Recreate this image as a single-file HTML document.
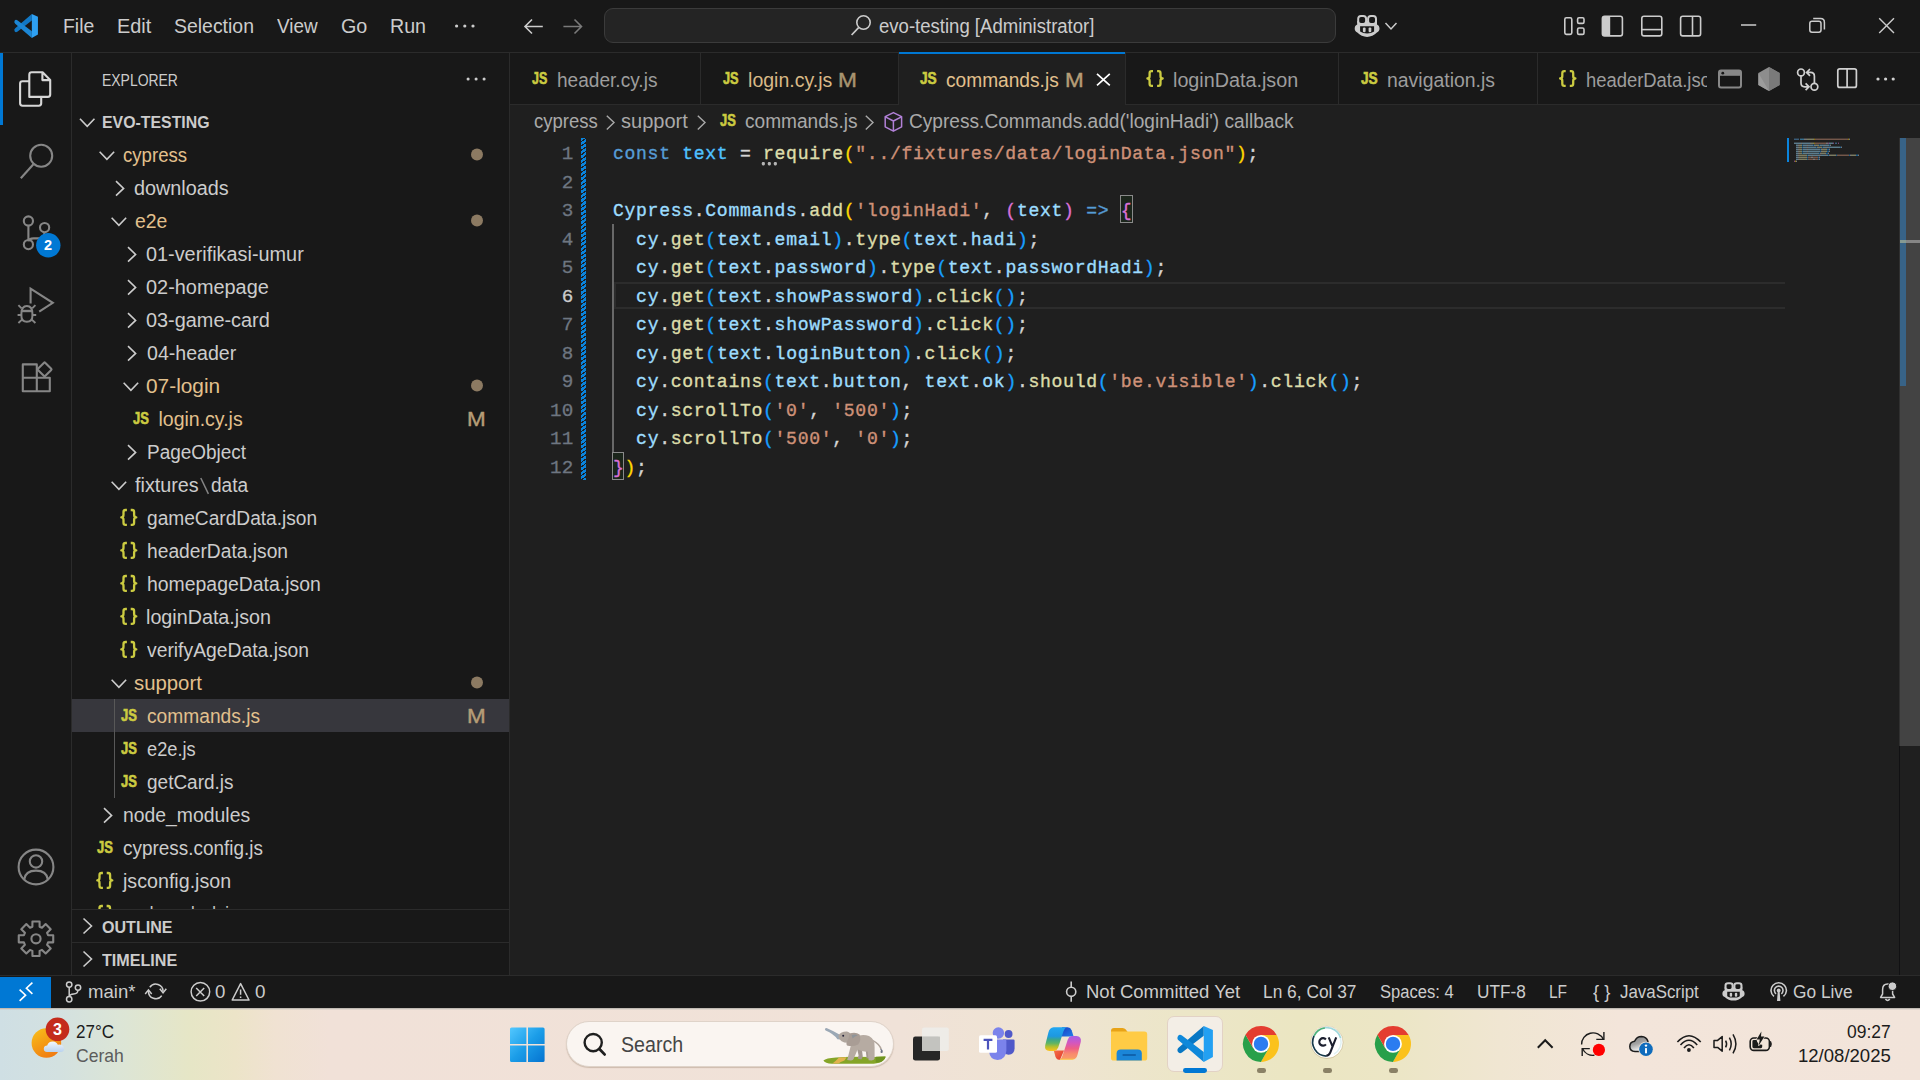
<!DOCTYPE html>
<html><head><meta charset="utf-8"><title>commands.js - evo-testing - Visual Studio Code</title>
<style>
html,body{margin:0;padding:0;background:#181818;}
body{width:1920px;height:1080px;position:relative;overflow:hidden;font-family:"Liberation Sans",sans-serif;}
.b{position:absolute;display:block;}
.t{position:absolute;display:block;white-space:pre;transform-origin:0 0;font-family:"Liberation Sans",sans-serif;}
svg{overflow:visible;}
</style></head><body>
<div class="b" style="left:0px;top:0px;width:1920px;height:52px;background:#181818;"></div>
<div class="b" style="left:0px;top:52px;width:1920px;height:1px;background:#2b2b2b;"></div>
<svg class="b" style="left:0;top:0" width="1920" height="1080" viewBox="0 0 1920 1080"><g transform="translate(14,14) scale(0.6667)"><path d="M26.75,0 L26.75,9.8 L5.0,26.6 Q2.4,28.2 0.9,25.8 Q-0.4,23.2 1.8,21.4 Z" fill="#1177c4"/><path d="M26.75,35.9 L26.75,25.9 L5.0,9.4 Q2.4,7.8 0.9,10.2 Q-0.4,12.8 1.8,14.6 Z" fill="#1c86d4"/><path d="M26.75,0 L35.9,4.1 V30.9 L26.75,35.9 Z" fill="#2ea0f2"/></g></svg>
<span class="t" style="left:63.41px;top:17px;font-size:19.5px;line-height:19.5px;color:#ccc;transform:scaleX(0.9946);">File</span>
<span class="t" style="left:116.67px;top:17px;font-size:19.5px;line-height:19.5px;color:#ccc;transform:scaleX(1.0201);">Edit</span>
<span class="t" style="left:173.82px;top:17px;font-size:19.5px;line-height:19.5px;color:#ccc;transform:scaleX(0.9966);">Selection</span>
<span class="t" style="left:277.12px;top:17px;font-size:19.5px;line-height:19.5px;color:#ccc;transform:scaleX(0.9695);">View</span>
<span class="t" style="left:341.01px;top:17px;font-size:19.5px;line-height:19.5px;color:#ccc;transform:scaleX(1.0118);">Go</span>
<span class="t" style="left:389.69px;top:17px;font-size:19.5px;line-height:19.5px;color:#ccc;transform:scaleX(1.0059);">Run</span>
<svg class="b" style="left:0;top:0" width="1920" height="1080" viewBox="0 0 1920 1080"><circle cx="456.60" cy="26" r="1.6" fill="#cccccc"/><circle cx="464.80" cy="26" r="1.6" fill="#cccccc"/><circle cx="473.00" cy="26" r="1.6" fill="#cccccc"/></svg>
<svg class="b" style="left:0;top:0" width="1920" height="1080" viewBox="0 0 1920 1080"><path d="M542.8,26.5 H525.1999999999999 M532.0,19.5 L525.0,26.5 L532.0,33.5" fill="none" stroke="#cccccc" stroke-width="1.6"/></svg>
<svg class="b" style="left:0;top:0" width="1920" height="1080" viewBox="0 0 1920 1080"><path d="M563.4,26.5 H581.3000000000001 M574.5,19.5 L581.5,26.5 L574.5,33.5" fill="none" stroke="#7a7a7a" stroke-width="1.6"/></svg>
<div class="b" style="left:604px;top:8px;width:730px;height:33px;background:#242424;border:1px solid #3b3b3b;border-radius:9px;"></div>
<svg class="b" style="left:0;top:0" width="1920" height="1080" viewBox="0 0 1920 1080"><circle cx="863.5" cy="22.5" r="6.7" fill="none" stroke="#cccccc" stroke-width="1.6"/><path d="M858.6,27.6 L851.6,35" stroke="#cccccc" stroke-width="1.7" fill="none"/></svg>
<span class="t" style="left:878.91px;top:17px;font-size:19.5px;line-height:19.5px;color:#ccc;transform:scaleX(0.9510);">evo-testing [Administrator]</span>
<svg class="b" style="left:0;top:0" width="1920" height="1080" viewBox="0 0 1920 1080"><g transform="translate(1354.7,15) scale(1.0000,1.0000)"><path d="M2.5,6 V9.6 C0.8,10.3 0,11.7 0,13.6 C0,15.5 0.7,16.6 2.6,17.6 C5,20.4 9,22 12.4,22 C15.8,22 19.8,20.4 22.2,17.6 C24.1,16.6 24.8,15.5 24.8,13.6 C24.8,11.7 24,10.3 22.3,9.6 V6 Z" fill="#cccccc"/><rect x="3.5" y="1" width="7.9" height="8.0" rx="2.8" fill="#181818" stroke="#cccccc" stroke-width="2.0"/><rect x="13.4" y="1" width="7.9" height="8.0" rx="2.8" fill="#181818" stroke="#cccccc" stroke-width="2.0"/><path d="M5.4,11.3 H19.4 V16.6 C17.4,18 15,18.4 12.4,18.4 C9.8,18.4 7.4,18 5.4,16.6 Z" fill="#181818"/><rect x="8.2" y="12.4" width="2.7" height="4.9" rx="1.2" fill="#cccccc"/><rect x="13.9" y="12.4" width="2.7" height="4.9" rx="1.2" fill="#cccccc"/></g></svg>
<svg class="b" style="left:0;top:0" width="1920" height="1080" viewBox="0 0 1920 1080"><polyline points="1385.50,23.10 1391.00,28.90 1396.50,23.10" fill="none" stroke="#cccccc" stroke-width="1.5"/></svg>
<svg class="b" style="left:0;top:0" width="1920" height="1080" viewBox="0 0 1920 1080"><rect x="1564.8" y="17.8" width="7" height="16.6" rx="1.6" fill="none" stroke="#cccccc" stroke-width="1.6"/><rect x="1577.6" y="17.8" width="6.4" height="5.6" rx="1.4" fill="none" stroke="#cccccc" stroke-width="1.6"/><rect x="1577.6" y="28.0" width="6.4" height="6.4" rx="1.4" fill="none" stroke="#cccccc" stroke-width="1.6"/></svg>
<svg class="b" style="left:0;top:0" width="1920" height="1080" viewBox="0 0 1920 1080"><rect x="1602.4" y="16.3" width="20" height="19.6" rx="2.2" fill="none" stroke="#cccccc" stroke-width="1.6"/><path d="M1602.4,18 Q1602.4,16.3 1604.4,16.3 H1610.2 V35.9 H1604.4 Q1602.4,35.9 1602.4,34 Z" fill="#cccccc"/></svg>
<svg class="b" style="left:0;top:0" width="1920" height="1080" viewBox="0 0 1920 1080"><rect x="1641.8" y="16.3" width="20" height="19.6" rx="2.2" fill="none" stroke="#cccccc" stroke-width="1.6"/><path d="M1641.8,29.6 H1661.8" stroke="#cccccc" stroke-width="1.6"/></svg>
<svg class="b" style="left:0;top:0" width="1920" height="1080" viewBox="0 0 1920 1080"><rect x="1680.6" y="16.3" width="20" height="19.6" rx="2.2" fill="none" stroke="#cccccc" stroke-width="1.6"/><path d="M1692.5,16.3 V35.9" stroke="#cccccc" stroke-width="1.6"/></svg>
<svg class="b" style="left:0;top:0" width="1920" height="1080" viewBox="0 0 1920 1080"><path d="M1741,25 H1756.2" stroke="#cccccc" stroke-width="1.5"/></svg>
<svg class="b" style="left:0;top:0" width="1920" height="1080" viewBox="0 0 1920 1080"><rect x="1809.8" y="21.3" width="11.2" height="11" rx="2.2" fill="none" stroke="#cccccc" stroke-width="1.5"/><path d="M1813.2,18.6 H1820.6 Q1824.4,18.6 1824.4,22.4 V29.6" fill="none" stroke="#cccccc" stroke-width="1.5"/></svg>
<svg class="b" style="left:0;top:0" width="1920" height="1080" viewBox="0 0 1920 1080"><path d="M1879.2,18.2 L1894,33 M1894,18.2 L1879.2,33" stroke="#cccccc" stroke-width="1.4" fill="none"/></svg>
<div class="b" style="left:0px;top:53px;width:71px;height:922px;background:#181818;"></div>
<div class="b" style="left:71px;top:53px;width:1px;height:922px;background:#2b2b2b;"></div>
<div class="b" style="left:0px;top:53px;width:3px;height:72px;background:#0078d4;"></div>
<svg class="b" style="left:0;top:0" width="1920" height="1080" viewBox="0 0 1920 1080"><path d="M29.3,96.9 V74.7 Q29.3,72.3 31.7,72.3 H42.6 L50.2,79.9 V94.5 Q50.2,96.9 47.8,96.9 Z M42.4,72.6 V80.1 H50" fill="none" stroke="#d7d7d7" stroke-width="2.1" stroke-linejoin="round"/><path d="M29,81.2 H22.5 Q20.1,81.2 20.1,83.6 V103.3 Q20.1,105.7 22.5,105.7 H38.8 Q41.2,105.7 41.2,103.3 V97.2" fill="none" stroke="#d7d7d7" stroke-width="2.1" stroke-linejoin="round"/></svg>
<svg class="b" style="left:0;top:0" width="1920" height="1080" viewBox="0 0 1920 1080"><circle cx="41.2" cy="155.8" r="11" fill="none" stroke="#868686" stroke-width="2.1"/><path d="M33.4,164.2 L20.8,178.2" stroke="#868686" stroke-width="2.1" fill="none"/></svg>
<svg class="b" style="left:0;top:0" width="1920" height="1080" viewBox="0 0 1920 1080"><circle cx="28.4" cy="221" r="4.6" fill="none" stroke="#868686" stroke-width="2.1"/><circle cx="28.4" cy="244.6" r="4.6" fill="none" stroke="#868686" stroke-width="2.1"/><circle cx="44.6" cy="227.6" r="4.6" fill="none" stroke="#868686" stroke-width="2.1"/><path d="M28.4,225.6 V240 M44.6,232.2 Q44.2,238.4 37,238.4 H33.6 Q29,238.6 28.4,241.4" fill="none" stroke="#868686" stroke-width="2.1"/></svg>
<svg class="b" style="left:0;top:0" width="1920" height="1080" viewBox="0 0 1920 1080"><circle cx="48.3" cy="245.3" r="12.2" fill="#0078d4"/></svg>
<span class="t" style="left:44.10px;top:238px;font-size:14.5px;line-height:14.5px;color:#ffffff;font-weight:700;">2</span>
<svg class="b" style="left:0;top:0" width="1920" height="1080" viewBox="0 0 1920 1080"><path d="M30.6,303.4 V288.6 L52.8,302.8 L39.2,311.6" fill="none" stroke="#868686" stroke-width="2.1" stroke-linejoin="miter"/><path d="M21.4,313.6 Q21.4,306 26.9,306 Q32.4,306 32.4,313.6 V316 Q32.4,321.8 26.9,321.8 Q21.4,321.8 21.4,316 Z" fill="none" stroke="#868686" stroke-width="2.0"/><path d="M21.4,311 H32.4" fill="none" stroke="#868686" stroke-width="2.4"/><path d="M21.6,308.4 L18.4,305.2 M32.2,308.4 L35.4,305.2 M21.2,315 H17.6 M32.6,315 H36.2 M22,319.6 L18.4,323 M31.8,319.6 L35.4,323" fill="none" stroke="#868686" stroke-width="1.9"/></svg>
<svg class="b" style="left:0;top:0" width="1920" height="1080" viewBox="0 0 1920 1080"><path d="M22.8,364.4 H36.8 V391.2 H22.8 Z M22.8,377.8 H36.8 M36.8,377.8 H49.8 V391.2 H36.8" fill="none" stroke="#868686" stroke-width="2.1" stroke-linejoin="round"/><rect x="-5.1" y="-5.1" width="10.2" height="10.2" rx="0.8" transform="translate(44.6,369.4) rotate(45)" fill="none" stroke="#868686" stroke-width="2.1"/></svg>
<svg class="b" style="left:0;top:0" width="1920" height="1080" viewBox="0 0 1920 1080"><circle cx="36" cy="867" r="17.4" fill="none" stroke="#868686" stroke-width="2.1"/><circle cx="36" cy="861.4" r="6.2" fill="none" stroke="#868686" stroke-width="2.1"/><path d="M24.2,879.4 Q25.4,870.6 36,870.6 Q46.6,870.6 47.8,879.4" fill="none" stroke="#868686" stroke-width="2.1"/></svg>
<svg class="b" style="left:0;top:0" width="1920" height="1080" viewBox="0 0 1920 1080"><path d="M32.39,926.73 L32.43,921.57 L39.57,921.57 L39.61,926.73 L41.98,927.71 L45.66,924.09 L50.71,929.14 L47.09,932.82 L48.07,935.19 L53.23,935.23 L53.23,942.37 L48.07,942.41 L47.09,944.78 L50.71,948.46 L45.66,953.51 L41.98,949.89 L39.61,950.87 L39.57,956.03 L32.43,956.03 L32.39,950.87 L30.02,949.89 L26.34,953.51 L21.29,948.46 L24.91,944.78 L23.93,942.41 L18.77,942.37 L18.77,935.23 L23.93,935.19 L24.91,932.82 L21.29,929.14 L26.34,924.09 L30.02,927.71 Z" fill="none" stroke="#868686" stroke-width="2.1" stroke-linejoin="round"/><circle cx="36" cy="938.8" r="4.6" fill="none" stroke="#868686" stroke-width="2.1"/></svg>
<div class="b" style="left:72px;top:53px;width:437px;height:922px;background:#181818;"></div>
<div class="b" style="left:509px;top:53px;width:1px;height:922px;background:#2b2b2b;"></div>
<span class="t" style="left:101.66px;top:72px;font-size:17.2px;line-height:17.2px;color:#cccccc;transform:scaleX(0.8112);">EXPLORER</span>
<svg class="b" style="left:0;top:0" width="1920" height="1080" viewBox="0 0 1920 1080"><circle cx="468.10" cy="79" r="1.55" fill="#cccccc"/><circle cx="476.10" cy="79" r="1.55" fill="#cccccc"/><circle cx="484.10" cy="79" r="1.55" fill="#cccccc"/></svg>
<svg class="b" style="left:0;top:0" width="1920" height="1080" viewBox="0 0 1920 1080"><polyline points="79.95,118.70 87.20,126.30 94.45,118.70" fill="none" stroke="#cccccc" stroke-width="1.6"/></svg>
<span class="t" style="left:101.74px;top:114px;font-size:17.2px;line-height:17.2px;color:#cccccc;transform:scaleX(0.9233);font-weight:700;">EVO-TESTING</span>
<div class="b" style="left:72px;top:699px;width:437px;height:33px;background:#37373d;"></div>
<div class="b" style="left:114px;top:699px;width:1px;height:99px;background:#585858;"></div>
<svg class="b" style="left:0;top:0" width="1920" height="1080" viewBox="0 0 1920 1080"><polyline points="99.65,151.80 106.90,159.40 114.15,151.80" fill="none" stroke="#cccccc" stroke-width="1.6"/></svg>
<span class="t" style="left:122.54px;top:146px;font-size:19.5px;line-height:19.5px;color:#e2c08d;transform:scaleX(0.9546);">cypress</span>
<svg class="b" style="left:0;top:0" width="1920" height="1080" viewBox="0 0 1920 1080"><circle cx="477" cy="154.6" r="6" fill="#8c7a62"/></svg>
<svg class="b" style="left:0;top:0" width="1920" height="1080" viewBox="0 0 1920 1080"><polyline points="116.00,181.15 123.60,188.40 116.00,195.65" fill="none" stroke="#cccccc" stroke-width="1.6"/></svg>
<span class="t" style="left:134.49px;top:179px;font-size:19.5px;line-height:19.5px;color:#cccccc;transform:scaleX(1.0160);">downloads</span>
<svg class="b" style="left:0;top:0" width="1920" height="1080" viewBox="0 0 1920 1080"><polyline points="111.65,217.80 118.90,225.40 126.15,217.80" fill="none" stroke="#cccccc" stroke-width="1.6"/></svg>
<span class="t" style="left:134.50px;top:212px;font-size:19.5px;line-height:19.5px;color:#e2c08d;transform:scaleX(0.9945);">e2e</span>
<svg class="b" style="left:0;top:0" width="1920" height="1080" viewBox="0 0 1920 1080"><circle cx="477" cy="220.6" r="6" fill="#8c7a62"/></svg>
<svg class="b" style="left:0;top:0" width="1920" height="1080" viewBox="0 0 1920 1080"><polyline points="128.00,247.15 135.60,254.40 128.00,261.65" fill="none" stroke="#cccccc" stroke-width="1.6"/></svg>
<span class="t" style="left:146.49px;top:245px;font-size:19.5px;line-height:19.5px;color:#cccccc;transform:scaleX(1.0180);">01-verifikasi-umur</span>
<svg class="b" style="left:0;top:0" width="1920" height="1080" viewBox="0 0 1920 1080"><polyline points="128.00,280.15 135.60,287.40 128.00,294.65" fill="none" stroke="#cccccc" stroke-width="1.6"/></svg>
<span class="t" style="left:146.48px;top:278px;font-size:19.5px;line-height:19.5px;color:#cccccc;transform:scaleX(1.0204);">02-homepage</span>
<svg class="b" style="left:0;top:0" width="1920" height="1080" viewBox="0 0 1920 1080"><polyline points="128.00,313.15 135.60,320.40 128.00,327.65" fill="none" stroke="#cccccc" stroke-width="1.6"/></svg>
<span class="t" style="left:146.48px;top:311px;font-size:19.5px;line-height:19.5px;color:#cccccc;transform:scaleX(1.0198);">03-game-card</span>
<svg class="b" style="left:0;top:0" width="1920" height="1080" viewBox="0 0 1920 1080"><polyline points="128.00,346.15 135.60,353.40 128.00,360.65" fill="none" stroke="#cccccc" stroke-width="1.6"/></svg>
<span class="t" style="left:146.50px;top:344px;font-size:19.5px;line-height:19.5px;color:#cccccc;transform:scaleX(1.0037);">04-header</span>
<svg class="b" style="left:0;top:0" width="1920" height="1080" viewBox="0 0 1920 1080"><polyline points="123.65,382.80 130.90,390.40 138.15,382.80" fill="none" stroke="#cccccc" stroke-width="1.6"/></svg>
<span class="t" style="left:146.45px;top:377px;font-size:19.5px;line-height:19.5px;color:#e2c08d;transform:scaleX(1.0695);">07-login</span>
<svg class="b" style="left:0;top:0" width="1920" height="1080" viewBox="0 0 1920 1080"><circle cx="477" cy="385.6" r="6" fill="#8c7a62"/></svg>
<span class="t" style="left:133.00px;top:411px;font-size:15.6px;line-height:15.6px;color:#cbcb41;transform:scaleX(0.8335);font-weight:700;-webkit-text-stroke:0.6px;">JS</span>
<span class="t" style="left:158.50px;top:410px;font-size:19.5px;line-height:19.5px;color:#e2c08d;">login.cy.js</span>
<span class="t" style="left:467.36px;top:410px;font-size:19.3px;line-height:19.3px;color:#b69d76;transform:scaleX(1.1618);-webkit-text-stroke:0.4px;">M</span>
<svg class="b" style="left:0;top:0" width="1920" height="1080" viewBox="0 0 1920 1080"><polyline points="128.00,445.15 135.60,452.40 128.00,459.65" fill="none" stroke="#cccccc" stroke-width="1.6"/></svg>
<span class="t" style="left:146.54px;top:443px;font-size:19.5px;line-height:19.5px;color:#cccccc;transform:scaleX(0.9725);">PageObject</span>
<svg class="b" style="left:0;top:0" width="1920" height="1080" viewBox="0 0 1920 1080"><polyline points="111.65,481.80 118.90,489.40 126.15,481.80" fill="none" stroke="#cccccc" stroke-width="1.6"/></svg>
<span class="t" style="left:134.50px;top:476px;font-size:19.5px;line-height:19.5px;color:#cccccc;transform:scaleX(1.0138);">fixtures</span>
<svg class="b" style="left:0;top:0" width="1920" height="1080" viewBox="0 0 1920 1080"><path d="M200.8,478 L208.4,493.8" stroke="#858585" stroke-width="1.5" fill="none"/></svg>
<span class="t" style="left:210.90px;top:476px;font-size:19.5px;line-height:19.5px;color:#cccccc;transform:scaleX(0.9775);">data</span>
<svg class="b" style="left:0;top:0" width="1920" height="1080" viewBox="0 0 1920 1080"><path d="M126.90,510.00 H125.50 Q123.50,510.00 123.50,512.10 V514.80 Q123.50,517.40 121.30,517.40 Q123.50,517.40 123.50,520.00 V522.70 Q123.50,524.80 125.50,524.80 H126.90" fill="none" stroke="#cbcb41" stroke-width="2.3" stroke-linejoin="round"/><path d="M130.70,510.00 H132.10 Q134.10,510.00 134.10,512.10 V514.80 Q134.10,517.40 136.30,517.40 Q134.10,517.40 134.10,520.00 V522.70 Q134.10,524.80 132.10,524.80 H130.70" fill="none" stroke="#cbcb41" stroke-width="2.3" stroke-linejoin="round"/></svg>
<span class="t" style="left:146.52px;top:509px;font-size:19.5px;line-height:19.5px;color:#cccccc;transform:scaleX(0.9810);">gameCardData.json</span>
<svg class="b" style="left:0;top:0" width="1920" height="1080" viewBox="0 0 1920 1080"><path d="M126.90,543.00 H125.50 Q123.50,543.00 123.50,545.10 V547.80 Q123.50,550.40 121.30,550.40 Q123.50,550.40 123.50,553.00 V555.70 Q123.50,557.80 125.50,557.80 H126.90" fill="none" stroke="#cbcb41" stroke-width="2.3" stroke-linejoin="round"/><path d="M130.70,543.00 H132.10 Q134.10,543.00 134.10,545.10 V547.80 Q134.10,550.40 136.30,550.40 Q134.10,550.40 134.10,553.00 V555.70 Q134.10,557.80 132.10,557.80 H130.70" fill="none" stroke="#cbcb41" stroke-width="2.3" stroke-linejoin="round"/></svg>
<span class="t" style="left:146.52px;top:542px;font-size:19.5px;line-height:19.5px;color:#cccccc;transform:scaleX(0.9855);">headerData.json</span>
<svg class="b" style="left:0;top:0" width="1920" height="1080" viewBox="0 0 1920 1080"><path d="M126.90,576.00 H125.50 Q123.50,576.00 123.50,578.10 V580.80 Q123.50,583.40 121.30,583.40 Q123.50,583.40 123.50,586.00 V588.70 Q123.50,590.80 125.50,590.80 H126.90" fill="none" stroke="#cbcb41" stroke-width="2.3" stroke-linejoin="round"/><path d="M130.70,576.00 H132.10 Q134.10,576.00 134.10,578.10 V580.80 Q134.10,583.40 136.30,583.40 Q134.10,583.40 134.10,586.00 V588.70 Q134.10,590.80 132.10,590.80 H130.70" fill="none" stroke="#cbcb41" stroke-width="2.3" stroke-linejoin="round"/></svg>
<span class="t" style="left:146.51px;top:575px;font-size:19.5px;line-height:19.5px;color:#cccccc;transform:scaleX(0.9955);">homepageData.json</span>
<svg class="b" style="left:0;top:0" width="1920" height="1080" viewBox="0 0 1920 1080"><path d="M126.90,609.00 H125.50 Q123.50,609.00 123.50,611.10 V613.80 Q123.50,616.40 121.30,616.40 Q123.50,616.40 123.50,619.00 V621.70 Q123.50,623.80 125.50,623.80 H126.90" fill="none" stroke="#cbcb41" stroke-width="2.3" stroke-linejoin="round"/><path d="M130.70,609.00 H132.10 Q134.10,609.00 134.10,611.10 V613.80 Q134.10,616.40 136.30,616.40 Q134.10,616.40 134.10,619.00 V621.70 Q134.10,623.80 132.10,623.80 H130.70" fill="none" stroke="#cbcb41" stroke-width="2.3" stroke-linejoin="round"/></svg>
<span class="t" style="left:146.48px;top:608px;font-size:19.5px;line-height:19.5px;color:#cccccc;transform:scaleX(1.0115);">loginData.json</span>
<svg class="b" style="left:0;top:0" width="1920" height="1080" viewBox="0 0 1920 1080"><path d="M126.90,642.00 H125.50 Q123.50,642.00 123.50,644.10 V646.80 Q123.50,649.40 121.30,649.40 Q123.50,649.40 123.50,652.00 V654.70 Q123.50,656.80 125.50,656.80 H126.90" fill="none" stroke="#cbcb41" stroke-width="2.3" stroke-linejoin="round"/><path d="M130.70,642.00 H132.10 Q134.10,642.00 134.10,644.10 V646.80 Q134.10,649.40 136.30,649.40 Q134.10,649.40 134.10,652.00 V654.70 Q134.10,656.80 132.10,656.80 H130.70" fill="none" stroke="#cbcb41" stroke-width="2.3" stroke-linejoin="round"/></svg>
<span class="t" style="left:146.50px;top:641px;font-size:19.5px;line-height:19.5px;color:#cccccc;transform:scaleX(0.9901);">verifyAgeData.json</span>
<svg class="b" style="left:0;top:0" width="1920" height="1080" viewBox="0 0 1920 1080"><polyline points="111.65,679.80 118.90,687.40 126.15,679.80" fill="none" stroke="#cccccc" stroke-width="1.6"/></svg>
<span class="t" style="left:134.48px;top:674px;font-size:19.5px;line-height:19.5px;color:#e2c08d;transform:scaleX(1.0435);">support</span>
<svg class="b" style="left:0;top:0" width="1920" height="1080" viewBox="0 0 1920 1080"><circle cx="477" cy="682.6" r="6" fill="#8c7a62"/></svg>
<span class="t" style="left:121.00px;top:708px;font-size:15.6px;line-height:15.6px;color:#cbcb41;transform:scaleX(0.8335);font-weight:700;-webkit-text-stroke:0.6px;">JS</span>
<span class="t" style="left:146.51px;top:707px;font-size:19.5px;line-height:19.5px;color:#e2c08d;transform:scaleX(0.9836);">commands.js</span>
<span class="t" style="left:467.36px;top:707px;font-size:19.3px;line-height:19.3px;color:#b69d76;transform:scaleX(1.1618);-webkit-text-stroke:0.4px;">M</span>
<span class="t" style="left:121.00px;top:741px;font-size:15.6px;line-height:15.6px;color:#cbcb41;transform:scaleX(0.8335);font-weight:700;-webkit-text-stroke:0.6px;">JS</span>
<span class="t" style="left:146.55px;top:740px;font-size:19.5px;line-height:19.5px;color:#cccccc;transform:scaleX(0.9360);">e2e.js</span>
<span class="t" style="left:121.00px;top:774px;font-size:15.6px;line-height:15.6px;color:#cbcb41;transform:scaleX(0.8335);font-weight:700;-webkit-text-stroke:0.6px;">JS</span>
<span class="t" style="left:146.52px;top:773px;font-size:19.5px;line-height:19.5px;color:#cccccc;transform:scaleX(0.9740);">getCard.js</span>
<svg class="b" style="left:0;top:0" width="1920" height="1080" viewBox="0 0 1920 1080"><polyline points="104.00,808.15 111.60,815.40 104.00,822.65" fill="none" stroke="#cccccc" stroke-width="1.6"/></svg>
<span class="t" style="left:122.51px;top:806px;font-size:19.5px;line-height:19.5px;color:#cccccc;transform:scaleX(0.9934);">node_modules</span>
<span class="t" style="left:97.00px;top:840px;font-size:15.6px;line-height:15.6px;color:#cbcb41;transform:scaleX(0.8335);font-weight:700;-webkit-text-stroke:0.6px;">JS</span>
<span class="t" style="left:122.52px;top:839px;font-size:19.5px;line-height:19.5px;color:#cccccc;transform:scaleX(0.9703);">cypress.config.js</span>
<svg class="b" style="left:0;top:0" width="1920" height="1080" viewBox="0 0 1920 1080"><path d="M102.90,873.00 H101.50 Q99.50,873.00 99.50,875.10 V877.80 Q99.50,880.40 97.30,880.40 Q99.50,880.40 99.50,883.00 V885.70 Q99.50,887.80 101.50,887.80 H102.90" fill="none" stroke="#cbcb41" stroke-width="2.3" stroke-linejoin="round"/><path d="M106.70,873.00 H108.10 Q110.10,873.00 110.10,875.10 V877.80 Q110.10,880.40 112.30,880.40 Q110.10,880.40 110.10,883.00 V885.70 Q110.10,887.80 108.10,887.80 H106.70" fill="none" stroke="#cbcb41" stroke-width="2.3" stroke-linejoin="round"/></svg>
<span class="t" style="left:122.50px;top:872px;font-size:19.5px;line-height:19.5px;color:#cccccc;transform:scaleX(1.0081);">jsconfig.json</span>
<div class="b" style="left:72px;top:900px;width:437px;height:9px;overflow:hidden;"><span class="t" style="left:50.53px;top:5px;font-size:19.5px;line-height:19.5px;color:#ccc;transform:scaleX(0.8492);">package-lock.json</span><svg class="b" style="left:0;top:0" width="1920" height="1080" viewBox="0 0 1920 1080"><path d="M30.90,6.00 H29.50 Q27.50,6.00 27.50,8.10 V10.80 Q27.50,13.40 25.30,13.40 Q27.50,13.40 27.50,16.00 V18.70 Q27.50,20.80 29.50,20.80 H30.90" fill="none" stroke="#cbcb41" stroke-width="2.3" stroke-linejoin="round"/><path d="M34.60,6.00 H36.00 Q38.00,6.00 38.00,8.10 V10.80 Q38.00,13.40 40.20,13.40 Q38.00,13.40 38.00,16.00 V18.70 Q38.00,20.80 36.00,20.80 H34.60" fill="none" stroke="#cbcb41" stroke-width="2.3" stroke-linejoin="round"/></svg></div>
<div class="b" style="left:72px;top:909px;width:437px;height:1px;background:#2b2b2b;"></div>
<svg class="b" style="left:0;top:0" width="1920" height="1080" viewBox="0 0 1920 1080"><polyline points="83.50,918.50 91.50,926.00 83.50,933.50" fill="none" stroke="#cccccc" stroke-width="1.6"/></svg>
<span class="t" style="left:101.94px;top:919px;font-size:17.2px;line-height:17.2px;color:#cccccc;transform:scaleX(0.9351);font-weight:700;">OUTLINE</span>
<div class="b" style="left:72px;top:942px;width:437px;height:1px;background:#2b2b2b;"></div>
<svg class="b" style="left:0;top:0" width="1920" height="1080" viewBox="0 0 1920 1080"><polyline points="83.50,951.50 91.50,959.00 83.50,966.50" fill="none" stroke="#cccccc" stroke-width="1.6"/></svg>
<span class="t" style="left:102.42px;top:952px;font-size:17.2px;line-height:17.2px;color:#cccccc;transform:scaleX(0.9383);font-weight:700;">TIMELINE</span>
<div class="b" style="left:510px;top:53px;width:1410px;height:52px;background:#181818;"></div>
<div class="b" style="left:510px;top:104px;width:1410px;height:1px;background:#2b2b2b;"></div>
<div class="b" style="left:510px;top:105px;width:1410px;height:870px;background:#1f1f1f;"></div>
<span class="t" style="left:532.21px;top:71px;font-size:15.6px;line-height:15.6px;color:#cbcb41;transform:scaleX(0.8006);font-weight:700;-webkit-text-stroke:0.6px;">JS</span>
<span class="t" style="left:557.28px;top:71px;font-size:19.5px;line-height:19.5px;color:#9d9d9d;transform:scaleX(0.9786);">header.cy.js</span>
<div class="b" style="left:700px;top:53px;width:1px;height:51px;background:#2b2b2b;"></div>
<span class="t" style="left:722.51px;top:71px;font-size:15.6px;line-height:15.6px;color:#cbcb41;transform:scaleX(0.8171);font-weight:700;-webkit-text-stroke:0.6px;">JS</span>
<span class="t" style="left:748.09px;top:71px;font-size:19.5px;line-height:19.5px;color:#d9b987;">login.cy.js</span>
<span class="t" style="left:838.14px;top:71px;font-size:19.3px;line-height:19.3px;color:#a8946f;transform:scaleX(1.1773);-webkit-text-stroke:0.4px;">M</span>
<div class="b" style="left:898px;top:53px;width:1px;height:51px;background:#2b2b2b;"></div>
<div class="b" style="left:899px;top:53px;width:226px;height:52px;background:#1f1f1f;"></div>
<div class="b" style="left:899px;top:52px;width:226px;height:2px;background:#0078d4;"></div>
<span class="t" style="left:919.79px;top:71px;font-size:15.6px;line-height:15.6px;color:#cbcb41;transform:scaleX(0.8774);font-weight:700;-webkit-text-stroke:0.6px;">JS</span>
<span class="t" style="left:946.49px;top:71px;font-size:19.5px;line-height:19.5px;color:#e2c08d;transform:scaleX(0.9812);">commands.js</span>
<span class="t" style="left:1065.16px;top:71px;font-size:19.3px;line-height:19.3px;color:#b69d76;transform:scaleX(1.1618);-webkit-text-stroke:0.4px;">M</span>
<svg class="b" style="left:0;top:0" width="1920" height="1080" viewBox="0 0 1920 1080"><path d="M1097,73.8 L1109.8,85.4 M1109.8,73.8 L1097,85.4" stroke="#ffffff" stroke-width="1.7" fill="none"/></svg>
<div class="b" style="left:1125px;top:53px;width:1px;height:51px;background:#2b2b2b;"></div>
<svg class="b" style="left:0;top:0" width="1920" height="1080" viewBox="0 0 1920 1080"><path d="M1153.00,71.10 H1151.60 Q1149.60,71.10 1149.60,73.20 V75.90 Q1149.60,78.50 1147.40,78.50 Q1149.60,78.50 1149.60,81.10 V83.80 Q1149.60,85.90 1151.60,85.90 H1153.00" fill="none" stroke="#cbcb41" stroke-width="2.3" stroke-linejoin="round"/><path d="M1157.10,71.10 H1158.50 Q1160.50,71.10 1160.50,73.20 V75.90 Q1160.50,78.50 1162.70,78.50 Q1160.50,78.50 1160.50,81.10 V83.80 Q1160.50,85.90 1158.50,85.90 H1157.10" fill="none" stroke="#cbcb41" stroke-width="2.3" stroke-linejoin="round"/></svg>
<span class="t" style="left:1172.67px;top:71px;font-size:19.5px;line-height:19.5px;color:#9d9d9d;transform:scaleX(1.0124);">loginData.json</span>
<div class="b" style="left:1338px;top:53px;width:1px;height:51px;background:#2b2b2b;"></div>
<span class="t" style="left:1360.79px;top:71px;font-size:15.6px;line-height:15.6px;color:#cbcb41;transform:scaleX(0.8774);font-weight:700;-webkit-text-stroke:0.6px;">JS</span>
<span class="t" style="left:1386.71px;top:71px;font-size:19.5px;line-height:19.5px;color:#9d9d9d;transform:scaleX(0.9962);">navigation.js</span>
<div class="b" style="left:1537px;top:53px;width:1px;height:51px;background:#2b2b2b;"></div>
<svg class="b" style="left:0;top:0" width="1920" height="1080" viewBox="0 0 1920 1080"><path d="M1565.70,71.10 H1564.30 Q1562.30,71.10 1562.30,73.20 V75.90 Q1562.30,78.50 1560.10,78.50 Q1562.30,78.50 1562.30,81.10 V83.80 Q1562.30,85.90 1564.30,85.90 H1565.70" fill="none" stroke="#cbcb41" stroke-width="2.3" stroke-linejoin="round"/><path d="M1569.80,71.10 H1571.20 Q1573.20,71.10 1573.20,73.20 V75.90 Q1573.20,78.50 1575.40,78.50 Q1573.20,78.50 1573.20,81.10 V83.80 Q1573.20,85.90 1571.20,85.90 H1569.80" fill="none" stroke="#cbcb41" stroke-width="2.3" stroke-linejoin="round"/></svg>
<div class="b" style="left:1580px;top:60px;width:127px;height:40px;overflow:hidden;"><span class="t" style="left:5.72px;top:11px;font-size:19.5px;line-height:19.5px;color:#9d9d9d;transform:scaleX(0.9439);">headerData.json</span></div>
<svg class="b" style="left:0;top:0" width="1920" height="1080" viewBox="0 0 1920 1080"><rect x="1719" y="70.4" width="22" height="17.2" rx="2" fill="none" stroke="#888888" stroke-width="2"/><rect x="1719" y="70.4" width="22" height="5.4" fill="#888888"/><circle cx="1722.8" cy="73.2" r="1.4" fill="#181818"/></svg>
<svg class="b" style="left:0;top:0" width="1920" height="1080" viewBox="0 0 1920 1080"><path d="M1769,67 L1779.6,73 V85 L1769,91 L1758.4,85 V73 Z" fill="#8d8d8d"/><path d="M1769,67 L1779.6,73 V85 L1769,91 Z" fill="#7a7a7a"/><path d="M1758.4,73 L1769,91 L1758.4,85 Z" fill="#9c9c9c"/></svg>
<svg class="b" style="left:0;top:0" width="1920" height="1080" viewBox="0 0 1920 1080"><circle cx="1801" cy="72.4" r="3.4" fill="none" stroke="#d0d0d0" stroke-width="1.7"/><circle cx="1814.4" cy="86.8" r="3.4" fill="none" stroke="#d0d0d0" stroke-width="1.7"/><path d="M1801,75.8 V83 Q1801,86.8 1804.8,86.8 H1808.6 M1805.6,83.4 L1809,86.8 L1805.6,90.2" fill="none" stroke="#d0d0d0" stroke-width="1.7"/><path d="M1814.4,83.4 V76.2 Q1814.4,72.4 1810.6,72.4 H1807 M1810,69 L1806.6,72.4 L1810,75.8" fill="none" stroke="#d0d0d0" stroke-width="1.7"/></svg>
<svg class="b" style="left:0;top:0" width="1920" height="1080" viewBox="0 0 1920 1080"><rect x="1837.8" y="68.8" width="18.6" height="18.6" rx="2" fill="none" stroke="#d0d0d0" stroke-width="1.7"/><path d="M1847.1,68.8 V87.4" stroke="#d0d0d0" stroke-width="1.7"/></svg>
<svg class="b" style="left:0;top:0" width="1920" height="1080" viewBox="0 0 1920 1080"><circle cx="1878.00" cy="79" r="1.6" fill="#d0d0d0"/><circle cx="1885.60" cy="79" r="1.6" fill="#d0d0d0"/><circle cx="1893.20" cy="79" r="1.6" fill="#d0d0d0"/></svg>
<span class="t" style="left:533.81px;top:112px;font-size:19.5px;line-height:19.5px;color:#a9a9a9;transform:scaleX(0.9505);">cypress</span>
<svg class="b" style="left:0;top:0" width="1920" height="1080" viewBox="0 0 1920 1080"><polyline points="606.80,115.80 614.00,122.60 606.80,129.40" fill="none" stroke="#a9a9a9" stroke-width="1.4"/></svg>
<span class="t" style="left:621.34px;top:112px;font-size:19.5px;line-height:19.5px;color:#a9a9a9;transform:scaleX(1.0271);">support</span>
<svg class="b" style="left:0;top:0" width="1920" height="1080" viewBox="0 0 1920 1080"><polyline points="697.80,115.80 705.00,122.60 697.80,129.40" fill="none" stroke="#a9a9a9" stroke-width="1.4"/></svg>
<span class="t" style="left:719.70px;top:113px;font-size:15.6px;line-height:15.6px;color:#cbcb41;transform:scaleX(0.8280);font-weight:700;-webkit-text-stroke:0.6px;">JS</span>
<span class="t" style="left:745.19px;top:112px;font-size:19.5px;line-height:19.5px;color:#a9a9a9;transform:scaleX(0.9794);">commands.js</span>
<svg class="b" style="left:0;top:0" width="1920" height="1080" viewBox="0 0 1920 1080"><polyline points="865.80,115.80 873.00,122.60 865.80,129.40" fill="none" stroke="#a9a9a9" stroke-width="1.4"/></svg>
<svg class="b" style="left:0;top:0" width="1920" height="1080" viewBox="0 0 1920 1080"><path d="M893.4,112.6 L901.6,116.6 V126.8 L893.4,131.2 L885.2,126.8 V116.6 Z M885.4,116.8 L893.4,121 L901.4,116.8 M893.4,121 V131" fill="none" stroke="#b180d7" stroke-width="1.5" stroke-linejoin="round"/></svg>
<span class="t" style="left:909.03px;top:112px;font-size:19.5px;line-height:19.5px;color:#a9a9a9;transform:scaleX(0.9805);">Cypress.Commands.add('loginHadi') callback</span>
<div class="b" style="left:614px;top:281.5px;width:1171px;height:2px;background:#2c2c2c;"></div>
<div class="b" style="left:614px;top:306.5px;width:1171px;height:2px;background:#2c2c2c;"></div>
<div class="b" style="left:614px;top:281.5px;width:2px;height:27px;background:#2c2c2c;"></div>
<div class="b" style="left:580.5px;top:138px;width:5.4px;height:342px;background:repeating-linear-gradient(145deg,#0a84dd 0px,#0a84dd 2.5px,#1f1f1f 2.5px,#1f1f1f 3.6px);"></div>
<div class="b" style="left:612px;top:223.5px;width:2px;height:228.0px;background:#686868;"></div>
<div class="b" style="left:1120.1827148437499px;top:195.4px;width:10.3518798828125px;height:25.8px;background:rgba(0,100,0,0.1);border:1.1px solid #8a8a8a;"></div>
<div class="b" style="left:611.9px;top:451.9px;width:10.3518798828125px;height:25.8px;background:rgba(0,100,0,0.1);border:1.1px solid #8a8a8a;"></div>
<span class="t" style="left:561.65px;top:145px;font-size:19.25px;line-height:19.25px;color:#6e7681;font-family:&quot;Liberation Mono&quot;,monospace;-webkit-text-stroke:0.3px;">1</span>
<span class="t" style="left:612.65px;top:145px;font-size:19.25px;line-height:19.25px;font-family:&quot;Liberation Mono&quot;,monospace;letter-spacing:0.7219px;transform:scaleX(0.94);-webkit-text-stroke:0.38px;"><span style="color:#569cd6">const</span><span style="color:#d4d4d4"> </span><span style="color:#4fc1ff">text</span><span style="color:#d4d4d4"> = </span><span style="color:#dcdcaa">require</span><span style="color:#ffd700">(</span><span style="color:#ce9178">"../fixtures/data/loginData.json"</span><span style="color:#ffd700">)</span><span style="color:#d4d4d4">;</span></span>
<span class="t" style="left:561.65px;top:174px;font-size:19.25px;line-height:19.25px;color:#6e7681;font-family:&quot;Liberation Mono&quot;,monospace;-webkit-text-stroke:0.3px;">2</span>
<span class="t" style="left:561.65px;top:202px;font-size:19.25px;line-height:19.25px;color:#6e7681;font-family:&quot;Liberation Mono&quot;,monospace;-webkit-text-stroke:0.3px;">3</span>
<span class="t" style="left:612.65px;top:202px;font-size:19.25px;line-height:19.25px;font-family:&quot;Liberation Mono&quot;,monospace;letter-spacing:0.7219px;transform:scaleX(0.94);-webkit-text-stroke:0.38px;"><span style="color:#9cdcfe">Cypress</span><span style="color:#d4d4d4">.</span><span style="color:#9cdcfe">Commands</span><span style="color:#d4d4d4">.</span><span style="color:#dcdcaa">add</span><span style="color:#ffd700">(</span><span style="color:#ce9178">'loginHadi'</span><span style="color:#d4d4d4">, </span><span style="color:#da70d6">(</span><span style="color:#9cdcfe">text</span><span style="color:#da70d6">)</span><span style="color:#d4d4d4"> </span><span style="color:#569cd6">=&gt;</span><span style="color:#d4d4d4"> </span><span style="color:#da70d6">{</span></span>
<span class="t" style="left:561.65px;top:231px;font-size:19.25px;line-height:19.25px;color:#6e7681;font-family:&quot;Liberation Mono&quot;,monospace;-webkit-text-stroke:0.3px;">4</span>
<span class="t" style="left:612.65px;top:231px;font-size:19.25px;line-height:19.25px;font-family:&quot;Liberation Mono&quot;,monospace;letter-spacing:0.7219px;transform:scaleX(0.94);-webkit-text-stroke:0.38px;"><span style="color:#d4d4d4">  </span><span style="color:#9cdcfe">cy</span><span style="color:#d4d4d4">.</span><span style="color:#dcdcaa">get</span><span style="color:#179fff">(</span><span style="color:#9cdcfe">text</span><span style="color:#d4d4d4">.</span><span style="color:#9cdcfe">email</span><span style="color:#179fff">)</span><span style="color:#d4d4d4">.</span><span style="color:#dcdcaa">type</span><span style="color:#179fff">(</span><span style="color:#9cdcfe">text</span><span style="color:#d4d4d4">.</span><span style="color:#9cdcfe">hadi</span><span style="color:#179fff">)</span><span style="color:#d4d4d4">;</span></span>
<span class="t" style="left:561.65px;top:259px;font-size:19.25px;line-height:19.25px;color:#6e7681;font-family:&quot;Liberation Mono&quot;,monospace;-webkit-text-stroke:0.3px;">5</span>
<span class="t" style="left:612.65px;top:259px;font-size:19.25px;line-height:19.25px;font-family:&quot;Liberation Mono&quot;,monospace;letter-spacing:0.7219px;transform:scaleX(0.94);-webkit-text-stroke:0.38px;"><span style="color:#d4d4d4">  </span><span style="color:#9cdcfe">cy</span><span style="color:#d4d4d4">.</span><span style="color:#dcdcaa">get</span><span style="color:#179fff">(</span><span style="color:#9cdcfe">text</span><span style="color:#d4d4d4">.</span><span style="color:#9cdcfe">password</span><span style="color:#179fff">)</span><span style="color:#d4d4d4">.</span><span style="color:#dcdcaa">type</span><span style="color:#179fff">(</span><span style="color:#9cdcfe">text</span><span style="color:#d4d4d4">.</span><span style="color:#9cdcfe">passwordHadi</span><span style="color:#179fff">)</span><span style="color:#d4d4d4">;</span></span>
<span class="t" style="left:561.65px;top:288px;font-size:19.25px;line-height:19.25px;color:#cccccc;font-family:&quot;Liberation Mono&quot;,monospace;-webkit-text-stroke:0.3px;">6</span>
<span class="t" style="left:612.65px;top:288px;font-size:19.25px;line-height:19.25px;font-family:&quot;Liberation Mono&quot;,monospace;letter-spacing:0.7219px;transform:scaleX(0.94);-webkit-text-stroke:0.38px;"><span style="color:#d4d4d4">  </span><span style="color:#9cdcfe">cy</span><span style="color:#d4d4d4">.</span><span style="color:#dcdcaa">get</span><span style="color:#179fff">(</span><span style="color:#9cdcfe">text</span><span style="color:#d4d4d4">.</span><span style="color:#9cdcfe">showPassword</span><span style="color:#179fff">)</span><span style="color:#d4d4d4">.</span><span style="color:#dcdcaa">click</span><span style="color:#179fff">()</span><span style="color:#d4d4d4">;</span></span>
<span class="t" style="left:561.65px;top:316px;font-size:19.25px;line-height:19.25px;color:#6e7681;font-family:&quot;Liberation Mono&quot;,monospace;-webkit-text-stroke:0.3px;">7</span>
<span class="t" style="left:612.65px;top:316px;font-size:19.25px;line-height:19.25px;font-family:&quot;Liberation Mono&quot;,monospace;letter-spacing:0.7219px;transform:scaleX(0.94);-webkit-text-stroke:0.38px;"><span style="color:#d4d4d4">  </span><span style="color:#9cdcfe">cy</span><span style="color:#d4d4d4">.</span><span style="color:#dcdcaa">get</span><span style="color:#179fff">(</span><span style="color:#9cdcfe">text</span><span style="color:#d4d4d4">.</span><span style="color:#9cdcfe">showPassword</span><span style="color:#179fff">)</span><span style="color:#d4d4d4">.</span><span style="color:#dcdcaa">click</span><span style="color:#179fff">()</span><span style="color:#d4d4d4">;</span></span>
<span class="t" style="left:561.65px;top:345px;font-size:19.25px;line-height:19.25px;color:#6e7681;font-family:&quot;Liberation Mono&quot;,monospace;-webkit-text-stroke:0.3px;">8</span>
<span class="t" style="left:612.65px;top:345px;font-size:19.25px;line-height:19.25px;font-family:&quot;Liberation Mono&quot;,monospace;letter-spacing:0.7219px;transform:scaleX(0.94);-webkit-text-stroke:0.38px;"><span style="color:#d4d4d4">  </span><span style="color:#9cdcfe">cy</span><span style="color:#d4d4d4">.</span><span style="color:#dcdcaa">get</span><span style="color:#179fff">(</span><span style="color:#9cdcfe">text</span><span style="color:#d4d4d4">.</span><span style="color:#9cdcfe">loginButton</span><span style="color:#179fff">)</span><span style="color:#d4d4d4">.</span><span style="color:#dcdcaa">click</span><span style="color:#179fff">()</span><span style="color:#d4d4d4">;</span></span>
<span class="t" style="left:561.65px;top:373px;font-size:19.25px;line-height:19.25px;color:#6e7681;font-family:&quot;Liberation Mono&quot;,monospace;-webkit-text-stroke:0.3px;">9</span>
<span class="t" style="left:612.65px;top:373px;font-size:19.25px;line-height:19.25px;font-family:&quot;Liberation Mono&quot;,monospace;letter-spacing:0.7219px;transform:scaleX(0.94);-webkit-text-stroke:0.38px;"><span style="color:#d4d4d4">  </span><span style="color:#9cdcfe">cy</span><span style="color:#d4d4d4">.</span><span style="color:#dcdcaa">contains</span><span style="color:#179fff">(</span><span style="color:#9cdcfe">text</span><span style="color:#d4d4d4">.</span><span style="color:#9cdcfe">button</span><span style="color:#d4d4d4">, </span><span style="color:#9cdcfe">text</span><span style="color:#d4d4d4">.</span><span style="color:#9cdcfe">ok</span><span style="color:#179fff">)</span><span style="color:#d4d4d4">.</span><span style="color:#dcdcaa">should</span><span style="color:#179fff">(</span><span style="color:#ce9178">'be.visible'</span><span style="color:#179fff">)</span><span style="color:#d4d4d4">.</span><span style="color:#dcdcaa">click</span><span style="color:#179fff">()</span><span style="color:#d4d4d4">;</span></span>
<span class="t" style="left:550.10px;top:402px;font-size:19.25px;line-height:19.25px;color:#6e7681;font-family:&quot;Liberation Mono&quot;,monospace;-webkit-text-stroke:0.3px;">10</span>
<span class="t" style="left:612.65px;top:402px;font-size:19.25px;line-height:19.25px;font-family:&quot;Liberation Mono&quot;,monospace;letter-spacing:0.7219px;transform:scaleX(0.94);-webkit-text-stroke:0.38px;"><span style="color:#d4d4d4">  </span><span style="color:#9cdcfe">cy</span><span style="color:#d4d4d4">.</span><span style="color:#dcdcaa">scrollTo</span><span style="color:#179fff">(</span><span style="color:#ce9178">'0'</span><span style="color:#d4d4d4">, </span><span style="color:#ce9178">'500'</span><span style="color:#179fff">)</span><span style="color:#d4d4d4">;</span></span>
<span class="t" style="left:550.10px;top:430px;font-size:19.25px;line-height:19.25px;color:#6e7681;font-family:&quot;Liberation Mono&quot;,monospace;-webkit-text-stroke:0.3px;">11</span>
<span class="t" style="left:612.65px;top:430px;font-size:19.25px;line-height:19.25px;font-family:&quot;Liberation Mono&quot;,monospace;letter-spacing:0.7219px;transform:scaleX(0.94);-webkit-text-stroke:0.38px;"><span style="color:#d4d4d4">  </span><span style="color:#9cdcfe">cy</span><span style="color:#d4d4d4">.</span><span style="color:#dcdcaa">scrollTo</span><span style="color:#179fff">(</span><span style="color:#ce9178">'500'</span><span style="color:#d4d4d4">, </span><span style="color:#ce9178">'0'</span><span style="color:#179fff">)</span><span style="color:#d4d4d4">;</span></span>
<span class="t" style="left:550.10px;top:459px;font-size:19.25px;line-height:19.25px;color:#6e7681;font-family:&quot;Liberation Mono&quot;,monospace;-webkit-text-stroke:0.3px;">12</span>
<span class="t" style="left:612.65px;top:459px;font-size:19.25px;line-height:19.25px;font-family:&quot;Liberation Mono&quot;,monospace;letter-spacing:0.7219px;transform:scaleX(0.94);-webkit-text-stroke:0.38px;"><span style="color:#da70d6">}</span><span style="color:#ffd700">)</span><span style="color:#d4d4d4">;</span></span>
<svg class="b" style="left:0;top:0" width="1920" height="1080" viewBox="0 0 1920 1080"><rect x="761.8" y="162.1" width="3.1" height="3.3" rx="1.1" fill="#b4b4b4"/><rect x="767.8" y="162.1" width="3.1" height="3.3" rx="1.1" fill="#b4b4b4"/><rect x="773.8" y="162.1" width="3.1" height="3.3" rx="1.1" fill="#b4b4b4"/></svg>
<div class="b" style="left:1787px;top:138px;width:2px;height:24px;background:#0a84dd;"></div>
<svg class="b" style="left:0;top:0" width="1920" height="1080" viewBox="0 0 1920 1080"><rect x="1794.0" y="138.6" width="5.0" height="1.3" fill="#569cd6" opacity="0.55"/><rect x="1800.0" y="138.6" width="4.0" height="1.3" fill="#4fc1ff" opacity="0.55"/><rect x="1804.0" y="138.6" width="3.0" height="1.3" fill="#d4d4d4" opacity="0.55"/><rect x="1807.0" y="138.6" width="7.0" height="1.3" fill="#dcdcaa" opacity="0.55"/><rect x="1814.0" y="138.6" width="1.0" height="1.3" fill="#ffd700" opacity="0.55"/><rect x="1815.0" y="138.6" width="33.0" height="1.3" fill="#ce9178" opacity="0.55"/><rect x="1848.0" y="138.6" width="1.0" height="1.3" fill="#ffd700" opacity="0.55"/><rect x="1849.0" y="138.6" width="1.0" height="1.3" fill="#d4d4d4" opacity="0.55"/><rect x="1794.0" y="142.6" width="7.0" height="1.3" fill="#9cdcfe" opacity="0.55"/><rect x="1801.0" y="142.6" width="1.0" height="1.3" fill="#d4d4d4" opacity="0.55"/><rect x="1802.0" y="142.6" width="8.0" height="1.3" fill="#9cdcfe" opacity="0.55"/><rect x="1810.0" y="142.6" width="1.0" height="1.3" fill="#d4d4d4" opacity="0.55"/><rect x="1811.0" y="142.6" width="3.0" height="1.3" fill="#dcdcaa" opacity="0.55"/><rect x="1814.0" y="142.6" width="1.0" height="1.3" fill="#ffd700" opacity="0.55"/><rect x="1815.0" y="142.6" width="11.0" height="1.3" fill="#ce9178" opacity="0.55"/><rect x="1826.0" y="142.6" width="2.0" height="1.3" fill="#d4d4d4" opacity="0.55"/><rect x="1828.0" y="142.6" width="1.0" height="1.3" fill="#da70d6" opacity="0.55"/><rect x="1829.0" y="142.6" width="4.0" height="1.3" fill="#9cdcfe" opacity="0.55"/><rect x="1833.0" y="142.6" width="1.0" height="1.3" fill="#da70d6" opacity="0.55"/><rect x="1835.0" y="142.6" width="2.0" height="1.3" fill="#569cd6" opacity="0.55"/><rect x="1838.0" y="142.6" width="1.0" height="1.3" fill="#da70d6" opacity="0.55"/><rect x="1796.0" y="144.6" width="2.0" height="1.3" fill="#9cdcfe" opacity="0.55"/><rect x="1798.0" y="144.6" width="1.0" height="1.3" fill="#d4d4d4" opacity="0.55"/><rect x="1799.0" y="144.6" width="3.0" height="1.3" fill="#dcdcaa" opacity="0.55"/><rect x="1802.0" y="144.6" width="1.0" height="1.3" fill="#179fff" opacity="0.55"/><rect x="1803.0" y="144.6" width="4.0" height="1.3" fill="#9cdcfe" opacity="0.55"/><rect x="1807.0" y="144.6" width="1.0" height="1.3" fill="#d4d4d4" opacity="0.55"/><rect x="1808.0" y="144.6" width="5.0" height="1.3" fill="#9cdcfe" opacity="0.55"/><rect x="1813.0" y="144.6" width="1.0" height="1.3" fill="#179fff" opacity="0.55"/><rect x="1814.0" y="144.6" width="1.0" height="1.3" fill="#d4d4d4" opacity="0.55"/><rect x="1815.0" y="144.6" width="4.0" height="1.3" fill="#dcdcaa" opacity="0.55"/><rect x="1819.0" y="144.6" width="1.0" height="1.3" fill="#179fff" opacity="0.55"/><rect x="1820.0" y="144.6" width="4.0" height="1.3" fill="#9cdcfe" opacity="0.55"/><rect x="1824.0" y="144.6" width="1.0" height="1.3" fill="#d4d4d4" opacity="0.55"/><rect x="1825.0" y="144.6" width="4.0" height="1.3" fill="#9cdcfe" opacity="0.55"/><rect x="1829.0" y="144.6" width="1.0" height="1.3" fill="#179fff" opacity="0.55"/><rect x="1830.0" y="144.6" width="1.0" height="1.3" fill="#d4d4d4" opacity="0.55"/><rect x="1796.0" y="146.6" width="2.0" height="1.3" fill="#9cdcfe" opacity="0.55"/><rect x="1798.0" y="146.6" width="1.0" height="1.3" fill="#d4d4d4" opacity="0.55"/><rect x="1799.0" y="146.6" width="3.0" height="1.3" fill="#dcdcaa" opacity="0.55"/><rect x="1802.0" y="146.6" width="1.0" height="1.3" fill="#179fff" opacity="0.55"/><rect x="1803.0" y="146.6" width="4.0" height="1.3" fill="#9cdcfe" opacity="0.55"/><rect x="1807.0" y="146.6" width="1.0" height="1.3" fill="#d4d4d4" opacity="0.55"/><rect x="1808.0" y="146.6" width="8.0" height="1.3" fill="#9cdcfe" opacity="0.55"/><rect x="1816.0" y="146.6" width="1.0" height="1.3" fill="#179fff" opacity="0.55"/><rect x="1817.0" y="146.6" width="1.0" height="1.3" fill="#d4d4d4" opacity="0.55"/><rect x="1818.0" y="146.6" width="4.0" height="1.3" fill="#dcdcaa" opacity="0.55"/><rect x="1822.0" y="146.6" width="1.0" height="1.3" fill="#179fff" opacity="0.55"/><rect x="1823.0" y="146.6" width="4.0" height="1.3" fill="#9cdcfe" opacity="0.55"/><rect x="1827.0" y="146.6" width="1.0" height="1.3" fill="#d4d4d4" opacity="0.55"/><rect x="1828.0" y="146.6" width="12.0" height="1.3" fill="#9cdcfe" opacity="0.55"/><rect x="1840.0" y="146.6" width="1.0" height="1.3" fill="#179fff" opacity="0.55"/><rect x="1841.0" y="146.6" width="1.0" height="1.3" fill="#d4d4d4" opacity="0.55"/><rect x="1796.0" y="148.6" width="2.0" height="1.3" fill="#9cdcfe" opacity="0.55"/><rect x="1798.0" y="148.6" width="1.0" height="1.3" fill="#d4d4d4" opacity="0.55"/><rect x="1799.0" y="148.6" width="3.0" height="1.3" fill="#dcdcaa" opacity="0.55"/><rect x="1802.0" y="148.6" width="1.0" height="1.3" fill="#179fff" opacity="0.55"/><rect x="1803.0" y="148.6" width="4.0" height="1.3" fill="#9cdcfe" opacity="0.55"/><rect x="1807.0" y="148.6" width="1.0" height="1.3" fill="#d4d4d4" opacity="0.55"/><rect x="1808.0" y="148.6" width="12.0" height="1.3" fill="#9cdcfe" opacity="0.55"/><rect x="1820.0" y="148.6" width="1.0" height="1.3" fill="#179fff" opacity="0.55"/><rect x="1821.0" y="148.6" width="1.0" height="1.3" fill="#d4d4d4" opacity="0.55"/><rect x="1822.0" y="148.6" width="5.0" height="1.3" fill="#dcdcaa" opacity="0.55"/><rect x="1827.0" y="148.6" width="2.0" height="1.3" fill="#179fff" opacity="0.55"/><rect x="1829.0" y="148.6" width="1.0" height="1.3" fill="#d4d4d4" opacity="0.55"/><rect x="1796.0" y="150.6" width="2.0" height="1.3" fill="#9cdcfe" opacity="0.55"/><rect x="1798.0" y="150.6" width="1.0" height="1.3" fill="#d4d4d4" opacity="0.55"/><rect x="1799.0" y="150.6" width="3.0" height="1.3" fill="#dcdcaa" opacity="0.55"/><rect x="1802.0" y="150.6" width="1.0" height="1.3" fill="#179fff" opacity="0.55"/><rect x="1803.0" y="150.6" width="4.0" height="1.3" fill="#9cdcfe" opacity="0.55"/><rect x="1807.0" y="150.6" width="1.0" height="1.3" fill="#d4d4d4" opacity="0.55"/><rect x="1808.0" y="150.6" width="12.0" height="1.3" fill="#9cdcfe" opacity="0.55"/><rect x="1820.0" y="150.6" width="1.0" height="1.3" fill="#179fff" opacity="0.55"/><rect x="1821.0" y="150.6" width="1.0" height="1.3" fill="#d4d4d4" opacity="0.55"/><rect x="1822.0" y="150.6" width="5.0" height="1.3" fill="#dcdcaa" opacity="0.55"/><rect x="1827.0" y="150.6" width="2.0" height="1.3" fill="#179fff" opacity="0.55"/><rect x="1829.0" y="150.6" width="1.0" height="1.3" fill="#d4d4d4" opacity="0.55"/><rect x="1796.0" y="152.6" width="2.0" height="1.3" fill="#9cdcfe" opacity="0.55"/><rect x="1798.0" y="152.6" width="1.0" height="1.3" fill="#d4d4d4" opacity="0.55"/><rect x="1799.0" y="152.6" width="3.0" height="1.3" fill="#dcdcaa" opacity="0.55"/><rect x="1802.0" y="152.6" width="1.0" height="1.3" fill="#179fff" opacity="0.55"/><rect x="1803.0" y="152.6" width="4.0" height="1.3" fill="#9cdcfe" opacity="0.55"/><rect x="1807.0" y="152.6" width="1.0" height="1.3" fill="#d4d4d4" opacity="0.55"/><rect x="1808.0" y="152.6" width="11.0" height="1.3" fill="#9cdcfe" opacity="0.55"/><rect x="1819.0" y="152.6" width="1.0" height="1.3" fill="#179fff" opacity="0.55"/><rect x="1820.0" y="152.6" width="1.0" height="1.3" fill="#d4d4d4" opacity="0.55"/><rect x="1821.0" y="152.6" width="5.0" height="1.3" fill="#dcdcaa" opacity="0.55"/><rect x="1826.0" y="152.6" width="2.0" height="1.3" fill="#179fff" opacity="0.55"/><rect x="1828.0" y="152.6" width="1.0" height="1.3" fill="#d4d4d4" opacity="0.55"/><rect x="1796.0" y="154.6" width="2.0" height="1.3" fill="#9cdcfe" opacity="0.55"/><rect x="1798.0" y="154.6" width="1.0" height="1.3" fill="#d4d4d4" opacity="0.55"/><rect x="1799.0" y="154.6" width="8.0" height="1.3" fill="#dcdcaa" opacity="0.55"/><rect x="1807.0" y="154.6" width="1.0" height="1.3" fill="#179fff" opacity="0.55"/><rect x="1808.0" y="154.6" width="4.0" height="1.3" fill="#9cdcfe" opacity="0.55"/><rect x="1812.0" y="154.6" width="1.0" height="1.3" fill="#d4d4d4" opacity="0.55"/><rect x="1813.0" y="154.6" width="6.0" height="1.3" fill="#9cdcfe" opacity="0.55"/><rect x="1819.0" y="154.6" width="2.0" height="1.3" fill="#d4d4d4" opacity="0.55"/><rect x="1821.0" y="154.6" width="4.0" height="1.3" fill="#9cdcfe" opacity="0.55"/><rect x="1825.0" y="154.6" width="1.0" height="1.3" fill="#d4d4d4" opacity="0.55"/><rect x="1826.0" y="154.6" width="2.0" height="1.3" fill="#9cdcfe" opacity="0.55"/><rect x="1828.0" y="154.6" width="1.0" height="1.3" fill="#179fff" opacity="0.55"/><rect x="1829.0" y="154.6" width="1.0" height="1.3" fill="#d4d4d4" opacity="0.55"/><rect x="1830.0" y="154.6" width="6.0" height="1.3" fill="#dcdcaa" opacity="0.55"/><rect x="1836.0" y="154.6" width="1.0" height="1.3" fill="#179fff" opacity="0.55"/><rect x="1837.0" y="154.6" width="12.0" height="1.3" fill="#ce9178" opacity="0.55"/><rect x="1849.0" y="154.6" width="1.0" height="1.3" fill="#179fff" opacity="0.55"/><rect x="1850.0" y="154.6" width="1.0" height="1.3" fill="#d4d4d4" opacity="0.55"/><rect x="1851.0" y="154.6" width="5.0" height="1.3" fill="#dcdcaa" opacity="0.55"/><rect x="1856.0" y="154.6" width="2.0" height="1.3" fill="#179fff" opacity="0.55"/><rect x="1858.0" y="154.6" width="1.0" height="1.3" fill="#d4d4d4" opacity="0.55"/><rect x="1796.0" y="156.6" width="2.0" height="1.3" fill="#9cdcfe" opacity="0.55"/><rect x="1798.0" y="156.6" width="1.0" height="1.3" fill="#d4d4d4" opacity="0.55"/><rect x="1799.0" y="156.6" width="8.0" height="1.3" fill="#dcdcaa" opacity="0.55"/><rect x="1807.0" y="156.6" width="1.0" height="1.3" fill="#179fff" opacity="0.55"/><rect x="1808.0" y="156.6" width="3.0" height="1.3" fill="#ce9178" opacity="0.55"/><rect x="1811.0" y="156.6" width="2.0" height="1.3" fill="#d4d4d4" opacity="0.55"/><rect x="1813.0" y="156.6" width="5.0" height="1.3" fill="#ce9178" opacity="0.55"/><rect x="1818.0" y="156.6" width="1.0" height="1.3" fill="#179fff" opacity="0.55"/><rect x="1819.0" y="156.6" width="1.0" height="1.3" fill="#d4d4d4" opacity="0.55"/><rect x="1796.0" y="158.6" width="2.0" height="1.3" fill="#9cdcfe" opacity="0.55"/><rect x="1798.0" y="158.6" width="1.0" height="1.3" fill="#d4d4d4" opacity="0.55"/><rect x="1799.0" y="158.6" width="8.0" height="1.3" fill="#dcdcaa" opacity="0.55"/><rect x="1807.0" y="158.6" width="1.0" height="1.3" fill="#179fff" opacity="0.55"/><rect x="1808.0" y="158.6" width="5.0" height="1.3" fill="#ce9178" opacity="0.55"/><rect x="1813.0" y="158.6" width="2.0" height="1.3" fill="#d4d4d4" opacity="0.55"/><rect x="1815.0" y="158.6" width="3.0" height="1.3" fill="#ce9178" opacity="0.55"/><rect x="1818.0" y="158.6" width="1.0" height="1.3" fill="#179fff" opacity="0.55"/><rect x="1819.0" y="158.6" width="1.0" height="1.3" fill="#d4d4d4" opacity="0.55"/><rect x="1794.0" y="160.6" width="1.0" height="1.3" fill="#da70d6" opacity="0.55"/><rect x="1795.0" y="160.6" width="1.0" height="1.3" fill="#ffd700" opacity="0.55"/><rect x="1796.0" y="160.6" width="1.0" height="1.3" fill="#d4d4d4" opacity="0.55"/></svg>
<div class="b" style="left:1899px;top:746px;width:1px;height:229px;background:#111113;"></div>
<div class="b" style="left:1899px;top:138px;width:1px;height:608px;background:#303030;"></div>
<div class="b" style="left:1900px;top:138px;width:20px;height:608px;background:#434343;"></div>
<div class="b" style="left:1900px;top:138px;width:6px;height:248px;background:#386387;"></div>
<div class="b" style="left:1900px;top:240px;width:20px;height:3px;background:#858585;"></div>
<div class="b" style="left:1900px;top:240px;width:6px;height:3px;background:#869a92;"></div>
<div class="b" style="left:0px;top:975px;width:1920px;height:33px;background:#181818;"></div>
<div class="b" style="left:0px;top:975px;width:1920px;height:1px;background:#2b2b2b;"></div>
<div class="b" style="left:0px;top:976.5px;width:51px;height:31.5px;background:#0078d4;"></div>
<svg class="b" style="left:0;top:0" width="1920" height="1080" viewBox="0 0 1920 1080"><path d="M19.6,989.6 L25.6,995.2 L19.6,1000.8 M32.4,982.6 L26.4,988.2 L32.4,993.8" fill="none" stroke="#ffffff" stroke-width="1.6"/></svg>
<svg class="b" style="left:0;top:0" width="1920" height="1080" viewBox="0 0 1920 1080"><circle cx="69.2" cy="984.6" r="2.7" fill="none" stroke="#cccccc" stroke-width="1.5"/><circle cx="69.2" cy="999.2" r="2.7" fill="none" stroke="#cccccc" stroke-width="1.5"/><circle cx="78" cy="987.6" r="2.7" fill="none" stroke="#cccccc" stroke-width="1.5"/><path d="M69.2,987.3 V996.5 M78,990.3 Q77.8,993.8 73.6,994 Q69.8,994.2 69.2,996.6" fill="none" stroke="#cccccc" stroke-width="1.5"/></svg>
<span class="t" style="left:88.17px;top:983px;font-size:18px;line-height:18px;color:#cccccc;transform:scaleX(1.0327);">main*</span>
<svg class="b" style="left:0;top:0" width="1920" height="1080" viewBox="0 0 1920 1080"><path d="M149.8,987.2 A7.3,7.3 0 0 1 163.05,991.6 M161.7,995.6 A7.3,7.3 0 0 1 148.45,991.2" fill="none" stroke="#cccccc" stroke-width="1.5"/><path d="M159.8,988.8 L163.05,992.9 L166.3,988.8 M145.2,994 L148.45,989.9 L151.7,994" fill="none" stroke="#cccccc" stroke-width="1.5"/></svg>
<svg class="b" style="left:0;top:0" width="1920" height="1080" viewBox="0 0 1920 1080"><circle cx="200.4" cy="991.8" r="9.3" fill="none" stroke="#cccccc" stroke-width="1.5"/><path d="M196.2,988 L204.2,996 M204.2,988 L196.2,996" stroke="#cccccc" stroke-width="1.5" fill="none"/></svg>
<span class="t" style="left:215.17px;top:983px;font-size:18px;line-height:18px;color:#cccccc;transform:scaleX(1.0343);">0</span>
<svg class="b" style="left:0;top:0" width="1920" height="1080" viewBox="0 0 1920 1080"><path d="M240.6,983.6 L249,1000 H232.2 Z" fill="none" stroke="#cccccc" stroke-width="1.5" stroke-linejoin="round"/><path d="M240.6,989.4 V994.8 M240.6,996.4 V998" stroke="#cccccc" stroke-width="1.5" fill="none"/></svg>
<span class="t" style="left:255.26px;top:983px;font-size:18px;line-height:18px;color:#cccccc;transform:scaleX(1.0460);">0</span>
<svg class="b" style="left:0;top:0" width="1920" height="1080" viewBox="0 0 1920 1080"><circle cx="1071.2" cy="991.8" r="4.6" fill="none" stroke="#cccccc" stroke-width="1.6"/><path d="M1071.2,981.6 V987.2 M1071.2,996.4 V1001.8" stroke="#cccccc" stroke-width="1.6" fill="none"/></svg>
<span class="t" style="left:1085.88px;top:983px;font-size:18px;line-height:18px;color:#cccccc;transform:scaleX(1.0278);">Not Committed Yet</span>
<span class="t" style="left:1263.18px;top:983px;font-size:18px;line-height:18px;color:#cccccc;transform:scaleX(0.9632);">Ln 6, Col 37</span>
<span class="t" style="left:1379.95px;top:983px;font-size:18px;line-height:18px;color:#cccccc;transform:scaleX(0.9211);">Spaces: 4</span>
<span class="t" style="left:1476.67px;top:983px;font-size:18px;line-height:18px;color:#cccccc;transform:scaleX(0.9565);">UTF-8</span>
<span class="t" style="left:1548.53px;top:983px;font-size:18px;line-height:18px;color:#cccccc;transform:scaleX(0.8613);">LF</span>
<span class="t" style="left:1592.70px;top:983px;font-size:18px;line-height:18px;color:#cccccc;transform:scaleX(1.0183);">{ }</span>
<span class="t" style="left:1620.24px;top:983px;font-size:18px;line-height:18px;color:#cccccc;transform:scaleX(0.9376);">JavaScript</span>
<svg class="b" style="left:0;top:0" width="1920" height="1080" viewBox="0 0 1920 1080"><g transform="translate(1722.4,982.4) scale(0.8952,0.8273)"><path d="M2.5,6 V9.6 C0.8,10.3 0,11.7 0,13.6 C0,15.5 0.7,16.6 2.6,17.6 C5,20.4 9,22 12.4,22 C15.8,22 19.8,20.4 22.2,17.6 C24.1,16.6 24.8,15.5 24.8,13.6 C24.8,11.7 24,10.3 22.3,9.6 V6 Z" fill="#cccccc"/><rect x="3.5" y="1" width="7.9" height="8.0" rx="2.8" fill="#181818" stroke="#cccccc" stroke-width="2.3"/><rect x="13.4" y="1" width="7.9" height="8.0" rx="2.8" fill="#181818" stroke="#cccccc" stroke-width="2.3"/><path d="M5.4,11.3 H19.4 V16.6 C17.4,18 15,18.4 12.4,18.4 C9.8,18.4 7.4,18 5.4,16.6 Z" fill="#181818"/><rect x="8.2" y="12.4" width="2.7" height="4.9" rx="1.2" fill="#cccccc"/><rect x="13.9" y="12.4" width="2.7" height="4.9" rx="1.2" fill="#cccccc"/></g></svg>
<svg class="b" style="left:0;top:0" width="1920" height="1080" viewBox="0 0 1920 1080"><path d="M1773.96,996.47 A7.7,7.7 0 1 1 1783.44,996.47 M1776.05,993.79 A4.3,4.3 0 1 1 1781.35,993.79" fill="none" stroke="#cccccc" stroke-width="1.6"/><circle cx="1778.7" cy="990.4" r="1.9" fill="#cccccc"/><path d="M1777.8,991.0 H1779.6000000000001 L1780.4,1001 H1777.0 Z" fill="#cccccc"/></svg>
<span class="t" style="left:1793.13px;top:983px;font-size:18px;line-height:18px;color:#cccccc;transform:scaleX(0.9614);">Go Live</span>
<svg class="b" style="left:0;top:0" width="1920" height="1080" viewBox="0 0 1920 1080"><path d="M1880.6,997.4 H1894.6 L1892.6,994 V989.6 Q1892.6,984 1887.6,984 Q1882.6,984 1882.6,989.6 V994 Z" fill="none" stroke="#cccccc" stroke-width="1.5" stroke-linejoin="round"/><path d="M1885.4,999 Q1887.6,1001.8 1889.8,999" fill="none" stroke="#cccccc" stroke-width="1.5"/><circle cx="1892.4" cy="986.2" r="4.3" fill="#cccccc" stroke="#181818" stroke-width="1"/></svg>
<div class="b" style="left:0;top:1008px;width:1920px;height:72px;background:linear-gradient(90deg,#cfdfe4 0px,#d3e1e0 60px,#dce5d6 120px,#e6e6c6 190px,#ece4c8 235px,#f0e2d2 275px,#f1e1d8 330px,#f0e2d8 900px,#efe4d2 1060px,#ece6c8 1180px,#ebe6c2 1300px,#ece6c6 1400px,#f0e6d2 1500px,#f3e5da 1620px,#f2e4da 1920px);"></div>
<div class="b" style="left:0px;top:1008px;width:1920px;height:1px;background:#c0bab3;"></div>
<div class="b" style="left:0px;top:1009px;width:1920px;height:1px;background:rgba(205,200,194,0.45);"></div>
<svg class="b" style="left:0;top:0" width="1920" height="1080" viewBox="0 0 1920 1080"><defs><linearGradient id="sun" x1="0" y1="0" x2="0.6" y2="1"><stop offset="0" stop-color="#f9c21a"/><stop offset="1" stop-color="#f07c12"/></linearGradient><linearGradient id="cl" x1="0" y1="0" x2="0" y2="1"><stop offset="0" stop-color="#f4f8fd"/><stop offset="1" stop-color="#b9d2ee"/></linearGradient></defs><circle cx="46.4" cy="1043" r="14.8" fill="url(#sun)"/><path d="M47,1052 Q43.6,1052 43.8,1048.6 Q44,1045.8 47.2,1045.6 Q48.4,1041.2 53,1041.4 Q56.6,1041.6 57.8,1044.8 Q61.4,1043.6 63.4,1046.4 Q65.4,1051.6 61,1052 Z" fill="url(#cl)"/><circle cx="57.5" cy="1029.3" r="11.8" fill="#c42b1c"/></svg>
<span class="t" style="left:53.03px;top:1021px;font-size:17px;line-height:17px;color:#ffffff;transform:scaleX(0.9467);font-weight:700;">3</span>
<span class="t" style="left:75.84px;top:1023px;font-size:18.6px;line-height:18.6px;color:#1b1b1b;transform:scaleX(0.9169);">27°C</span>
<span class="t" style="left:76.11px;top:1047px;font-size:18.6px;line-height:18.6px;color:#5c5c5c;transform:scaleX(0.9442);">Cerah</span>
<svg class="b" style="left:0;top:0" width="1920" height="1080" viewBox="0 0 1920 1080"><defs><linearGradient id="wl" x1="0" y1="0" x2="1" y2="1"><stop offset="0" stop-color="#53c8ff"/><stop offset="0.5" stop-color="#1b9de8"/><stop offset="1" stop-color="#0573d0"/></linearGradient></defs><path d="M510,1029 Q510,1027.4 511.6,1027.4 H526.4 V1043.9 H510 Z M528,1027.4 H543 Q544.6,1027.4 544.6,1029 V1043.9 H528 Z M510,1045.5 H526.4 V1062 H511.6 Q510,1062 510,1060.4 Z M528,1045.5 H544.6 V1060.4 Q544.6,1062 543,1062 H528 Z" fill="url(#wl)"/></svg>
<div class="b" style="left:566px;top:1021px;width:325.5px;height:44px;background:#faf5f1;border:1px solid #dfd3c9;border-radius:23px;box-shadow:0 1px 1px rgba(120,90,60,0.28);"></div>
<svg class="b" style="left:0;top:0" width="1920" height="1080" viewBox="0 0 1920 1080"><circle cx="593.2" cy="1042.6" r="8.6" fill="none" stroke="#1f1f1f" stroke-width="2.4"/><path d="M599.4,1049 L604.6,1054.4" stroke="#1f1f1f" stroke-width="2.8" stroke-linecap="round"/></svg>
<span class="t" style="left:620.81px;top:1035px;font-size:21.4px;line-height:21.4px;color:#454545;transform:scaleX(0.9168);">Search</span>
<svg class="b" style="left:0;top:0" width="1920" height="1080" viewBox="0 0 1920 1080"><path d="M823.4,1060.4 Q826,1058 836,1057.4 L850,1056.8 L875,1057 L885.6,1056.4 Q886,1058.4 881,1062 Q878,1063.8 870,1063.8 H832 Q825,1063.2 823.4,1060.4 Z" fill="#85a528"/><path d="M839,1057.6 L846.6,1057.2 L844.4,1060.4 Q840,1061.6 838.6,1063.6 L832.4,1063.6 Q836,1061 839,1057.6 Z" fill="#e2b24e"/><path d="M875.6,1056.8 L885.4,1056.4 Q885.8,1058.4 881,1062 L875.8,1062.6 Z" fill="#6f9420"/><path d="M856.6,1046.6 L861.6,1047 L862.8,1056.6 L861.4,1059.4 L857.6,1058.6 L858.6,1055.4 Z" fill="#a39890"/><path d="M865.6,1048.6 L870.6,1048 L869.8,1058 L866.6,1058.4 Z" fill="#a39890"/><path d="M873,1040.6 Q879.6,1044 881.2,1049.4" fill="none" stroke="#b0a59c" stroke-width="1.5"/><path d="M880.2,1048.8 Q883.4,1049.6 882.6,1052.4 Q881.4,1053.6 880.4,1052.2 Q881.6,1050.8 880.2,1048.8 Z" fill="#6b7385"/><path d="M855,1037 Q862,1033.8 869,1036 Q875.4,1039.4 874.6,1047 L874.6,1058.6 Q874.4,1060.4 871.6,1060.4 L868.6,1060.2 L867.6,1051.6 Q862,1052 857.6,1049.6 L853.6,1059 Q853,1060.6 850.6,1060.4 L847.2,1060 L850.6,1046.6 Q851,1040 855,1037 Z" fill="#b6aba2"/><path d="M825,1028.8 Q826,1027.6 827.6,1028.4 Q834,1031 839.4,1034.6 L841,1039.6 L837.4,1039.2 Q833.6,1034 825.6,1030.6 Q824.6,1029.6 825,1028.8 Z" fill="#9ba8b5"/><path d="M838.4,1035.6 Q841,1031.4 847,1031.6 Q851,1032.6 851.4,1037 L850,1042.6 Q845,1043.4 841.6,1041.2 Q838.6,1039.4 838.4,1035.6 Z" fill="#b0a69e"/><path d="M849.6,1033.4 Q856,1031.6 859.6,1034.6 Q861.6,1040.6 858.2,1044.6 Q853,1047 847,1045.6 Q846,1044 846.6,1042.6 Q849,1038.6 849.6,1033.4 Z" fill="#a99d95"/><path d="M851.6,1035 Q855.6,1033.6 857.6,1035.4 Q855,1036 852.6,1038.4 Z" fill="#8f9499"/><circle cx="843.2" cy="1035.8" r="1" fill="#26243a"/></svg>
<svg class="b" style="left:0;top:0" width="1920" height="1080" viewBox="0 0 1920 1080"><rect x="913" y="1036.6" width="27" height="24" rx="2.4" fill="#262626"/><rect x="922" y="1027.4" width="26.8" height="23.6" rx="2" fill="#eeeeea" fill-opacity="0.86"/><rect x="922" y="1036.6" width="18" height="14.4" fill="#c2c2be" fill-opacity="0.95"/></svg>
<svg class="b" style="left:0;top:0" width="1920" height="1080" viewBox="0 0 1920 1080"><circle cx="1008.6" cy="1034" r="3.9" fill="#5059c9"/><path d="M1003,1039.6 H1013.4 Q1014.6,1039.6 1014.6,1040.8 V1048.6 Q1014.4,1054.6 1008.6,1054.8 Q1003.6,1054.6 1003,1049.6 Z" fill="#5059c9"/><circle cx="998.4" cy="1033" r="5.7" fill="#7b83eb"/><path d="M989.4,1039.6 H1005 Q1006.4,1039.6 1006.4,1041 V1050.6 Q1006,1059.6 997.6,1060 Q989.6,1059.6 989,1051 Z" fill="#7b83eb"/><rect x="979" y="1035.2" width="18" height="17.6" rx="1.6" fill="#ffffff"/><path d="M983.6,1039.8 H992.4 M988,1039.8 V1049.4" stroke="#4b53bc" stroke-width="2.2" fill="none"/></svg>
<svg class="b" style="left:0;top:0" width="1920" height="1080" viewBox="0 0 1920 1080"><defs><linearGradient id="cpL" x1="0" y1="0" x2="0" y2="1"><stop offset="0" stop-color="#22a7f2"/><stop offset="0.38" stop-color="#1e98e0"/><stop offset="0.52" stop-color="#3aa68c"/><stop offset="0.68" stop-color="#62b562"/><stop offset="0.82" stop-color="#b4bf2e"/><stop offset="1" stop-color="#ffc21a"/></linearGradient><linearGradient id="cpR" x1="0" y1="0" x2="0" y2="1"><stop offset="0" stop-color="#a45ee8"/><stop offset="0.3" stop-color="#d457bd"/><stop offset="0.52" stop-color="#ee5f86"/><stop offset="0.75" stop-color="#f88a6c"/><stop offset="0.92" stop-color="#f9986a"/><stop offset="1" stop-color="#fcc63a"/></linearGradient><linearGradient id="cpB" x1="0" y1="0" x2="1" y2="1"><stop offset="0" stop-color="#1a3fc4"/><stop offset="1" stop-color="#1f7fe8"/></linearGradient><linearGradient id="cpO" x1="0" y1="0" x2="1" y2="1"><stop offset="0" stop-color="#f4704a"/><stop offset="1" stop-color="#e2352a"/></linearGradient></defs><path d="M1062,1027.2 H1067.6 Q1070.6,1027.4 1071.6,1030.2 L1073.6,1036.6 H1061.4 Z" fill="url(#cpB)"/><path d="M1053.8,1050.4 H1064 L1060,1059.8 H1059 Q1056.2,1059.6 1055.4,1056.6 Z" fill="url(#cpO)"/><path d="M1053.6,1027.2 H1066.4 Q1064.6,1028 1063.4,1031.6 L1058.2,1047.6 Q1057.2,1050.6 1054.2,1051 H1049.6 Q1044.2,1050.6 1045.2,1045.2 L1048.4,1032.4 Q1049.6,1027.6 1053.6,1027.2 Z" fill="url(#cpL)"/><path d="M1072.4,1059.8 H1059.6 Q1061.4,1059 1062.6,1055.4 L1067.8,1039.4 Q1068.8,1036.4 1071.8,1036 H1076.4 Q1081.8,1036.4 1080.8,1041.8 L1077.6,1054.6 Q1076.4,1059.4 1072.4,1059.8 Z" fill="url(#cpR)"/></svg>
<svg class="b" style="left:0;top:0" width="1920" height="1080" viewBox="0 0 1920 1080"><path d="M1111,1031 Q1111,1028 1114,1028 H1122.6 Q1124.6,1028 1125.8,1029.6 L1128,1032.4 H1111 Z" fill="#e8a317"/><path d="M1111,1031.6 H1144.4 Q1147.2,1031.6 1147.2,1034.4 V1058 Q1147.2,1060.6 1144.4,1060.6 H1113.8 Q1111,1060.6 1111,1058 Z" fill="#ffcb45"/><path d="M1116.6,1060.6 V1053.4 Q1116.6,1049.4 1120.6,1049.4 H1137.8 Q1141.8,1049.4 1141.8,1053.4 V1060.6 Z" fill="#1b86d8"/><path d="M1122.6,1055 H1135.8" stroke="#0b559c" stroke-width="1.4"/></svg>
<div class="b" style="left:1166.8px;top:1015.7px;width:54.4px;height:54.4px;background:#f3eee6;border:1px solid #e2d2c5;border-radius:7px;"></div>
<svg class="b" style="left:0;top:0" width="1920" height="1080" viewBox="0 0 1920 1080"><g transform="translate(1177,1026) scale(1.0000)"><path d="M26.75,0 L26.75,9.8 L5.0,26.6 Q2.4,28.2 0.9,25.8 Q-0.4,23.2 1.8,21.4 Z" fill="#0877c4"/><path d="M26.75,35.9 L26.75,25.9 L5.0,9.4 Q2.4,7.8 0.9,10.2 Q-0.4,12.8 1.8,14.6 Z" fill="#0e88da"/><path d="M26.75,0 L35.9,4.1 V30.9 L26.75,35.9 Z" fill="#23a0f2"/></g></svg>
<div class="b" style="left:1183px;top:1068px;width:24px;height:4.8px;background:#0078d4;border-radius:2.4px;"></div>
<svg class="b" style="left:0;top:0" width="1920" height="1080" viewBox="0 0 1920 1080"><path d="M1261.00,1034.99 L1276.64,1034.99 A18,18 0 0 1 1260.90,1061.90 L1268.72,1048.36 L1261,1043.9 Z" fill="#fbc21c"/><path d="M1268.72,1048.36 L1260.90,1061.90 A18,18 0 0 1 1245.46,1034.81 L1253.28,1048.36 L1261,1043.9 Z" fill="#28a04a"/><path d="M1253.28,1048.36 L1245.46,1034.81 A18,18 0 0 1 1276.64,1034.99 L1261.00,1034.99 L1261,1043.9 Z" fill="#e43d30"/><circle cx="1261" cy="1043.9" r="8.91" fill="#ffffff"/><circle cx="1261" cy="1043.9" r="7.20" fill="#2b7cf0"/></svg>
<div class="b" style="left:1257px;top:1068px;width:9.2px;height:4.6px;background:#8a8166;border-radius:2.3px;"></div>
<svg class="b" style="left:0;top:0" width="1920" height="1080" viewBox="0 0 1920 1080"><circle cx="1326.9" cy="1041.9" r="15.9" fill="#ffffff"/><circle cx="1326.9" cy="1042.4" r="16.2" fill="none" stroke="rgba(150,120,80,0.25)" stroke-width="1"/><path d="M1314.0,1035.9 A14.2,14.2 0 0 0 1326.4,1056.1" fill="none" stroke="#173a4a" stroke-width="1.7"/><path d="M1314.0,1035.9 A14.2,14.2 0 0 1 1324.9,1027.8" fill="none" stroke="#4fb27c" stroke-width="1.7"/><path d="M1324.9,1027.8 A14.2,14.2 0 0 1 1340.6,1038.2" fill="none" stroke="#9fd8dc" stroke-width="1.6"/><path d="M1340.6,1038.2 A14.2,14.2 0 0 1 1334,1054.2" fill="none" stroke="#dff1f3" stroke-width="1.4"/><path d="M1325.9,1039.5 A3.75,3.75 0 1 0 1325.9,1044.3" fill="none" stroke="#1b1e2e" stroke-width="2.1"/><path d="M1328.7,1037.4 L1332.5,1046.4 M1336.2,1037.4 L1330.2,1052.6 Q1329,1055.6 1326.2,1055.8" fill="none" stroke="#1b1e2e" stroke-width="2.1" stroke-linejoin="round"/></svg>
<div class="b" style="left:1323px;top:1068px;width:9.2px;height:4.6px;background:#8a8166;border-radius:2.3px;"></div>
<svg class="b" style="left:0;top:0" width="1920" height="1080" viewBox="0 0 1920 1080"><path d="M1393.00,1034.99 L1408.64,1034.99 A18,18 0 0 1 1392.90,1061.90 L1400.72,1048.36 L1393,1043.9 Z" fill="#fbc21c"/><path d="M1400.72,1048.36 L1392.90,1061.90 A18,18 0 0 1 1377.46,1034.81 L1385.28,1048.36 L1393,1043.9 Z" fill="#28a04a"/><path d="M1385.28,1048.36 L1377.46,1034.81 A18,18 0 0 1 1408.64,1034.99 L1393.00,1034.99 L1393,1043.9 Z" fill="#e43d30"/><circle cx="1393" cy="1043.9" r="8.91" fill="#ffffff"/><circle cx="1393" cy="1043.9" r="7.20" fill="#2b7cf0"/></svg>
<div class="b" style="left:1389px;top:1068px;width:9.2px;height:4.6px;background:#8a8166;border-radius:2.3px;"></div>
<svg class="b" style="left:0;top:0" width="1920" height="1080" viewBox="0 0 1920 1080"><path d="M1537.8,1047.8 L1545.2,1040.2 L1552.6,1047.8" fill="none" stroke="#1b1b1b" stroke-width="2"/></svg>
<svg class="b" style="left:0;top:0" width="1920" height="1080" viewBox="0 0 1920 1080"><path d="M1581.6,1044.6 A11.4,11.4 0 0 1 1603.2,1039.2 M1582.6,1048.8 A11.4,11.4 0 0 0 1594.4,1055.3" fill="none" stroke="#1b1b1b" stroke-width="1.4"/><path d="M1603.9,1031.9 V1039.4 H1596.3 M1582.2,1055.9 V1048.6 H1589.8" fill="none" stroke="#1b1b1b" stroke-width="1.4"/><circle cx="1598.9" cy="1049.9" r="6.1" fill="#ff0000"/></svg>
<svg class="b" style="left:0;top:0" width="1920" height="1080" viewBox="0 0 1920 1080"><defs><linearGradient id="od" x1="0" y1="0" x2="0.35" y2="1"><stop offset="0" stop-color="#7e7e7e"/><stop offset="0.55" stop-color="#a4a4a4"/><stop offset="1" stop-color="#f4f4f4"/></linearGradient></defs><path d="M1635,1051.4 Q1629.8,1051.2 1629.8,1046.4 Q1629.9,1041.8 1634.6,1041.2 Q1636.6,1036.5 1641.6,1036.5 Q1646.4,1036.7 1647.9,1041.2 L1648,1050 L1641,1051.4 Z" fill="url(#od)" stroke="#1c1c1c" stroke-width="1.5" stroke-linejoin="round"/><circle cx="1646" cy="1049.3" r="7.6" fill="#f1e5d6"/><circle cx="1646" cy="1049.3" r="6.8" fill="#0f6cbd"/><rect x="1645.05" y="1048.1" width="1.9" height="5.2" fill="#fff"/><circle cx="1646" cy="1045.6" r="1.2" fill="#fff"/></svg>
<svg class="b" style="left:0;top:0" width="1920" height="1080" viewBox="0 0 1920 1080"><path d="M1677.4,1042 Q1689,1029.4 1700.7,1042 M1680.5,1045 Q1689,1035.6 1697.2,1045 M1684,1048 Q1689,1041.4 1693.9,1048" fill="none" stroke="#1b1b1b" stroke-width="1.6"/><circle cx="1688.9" cy="1050" r="1.9" fill="#1b1b1b"/></svg>
<svg class="b" style="left:0;top:0" width="1920" height="1080" viewBox="0 0 1920 1080"><path d="M1714,1040.4 H1717.6 L1722.2,1036.6 V1051.2 L1717.6,1047.4 H1714 Z" fill="none" stroke="#1b1b1b" stroke-width="1.5" stroke-linejoin="round"/><path d="M1725.6,1040.6 Q1727.6,1043.9 1725.6,1047.4 M1729.4,1037.6 Q1733,1043.9 1729.4,1050.4 M1733,1034.4 Q1738.8,1043.9 1733,1053.4" fill="none" stroke="#1b1b1b" stroke-width="1.5"/></svg>
<svg class="b" style="left:0;top:0" width="1920" height="1080" viewBox="0 0 1920 1080"><rect x="1750.2" y="1038" width="19.2" height="12.4" rx="3.6" fill="none" stroke="#1b1b1b" stroke-width="1.6"/><path d="M1770.6,1041.4 Q1772,1044 1770.6,1046.8 Z" fill="#1b1b1b" stroke="#1b1b1b" stroke-width="1"/><path d="M1752.4,1041.4 Q1752.4,1040 1753.8,1040 H1756.6 Q1757.4,1044.6 1762.2,1044.8 V1046.8 Q1762.2,1048.2 1760.8,1048.2 H1753.8 Q1752.4,1048.2 1752.4,1046.8 Z" fill="#1b1b1b"/><path d="M1761.4,1031.4 L1756.6,1039.4 H1759.8 L1758.6,1045.8 L1764.4,1036.6 H1761 Z" fill="#1b1b1b" stroke="#f1e5d8" stroke-width="1.1" paint-order="stroke"/></svg>
<span class="t" style="left:1847.12px;top:1023px;font-size:18.3px;line-height:18.3px;color:#1b1b1b;transform:scaleX(0.9556);">09:27</span>
<span class="t" style="left:1797.89px;top:1047px;font-size:18.3px;line-height:18.3px;color:#1b1b1b;transform:scaleX(1.0142);">12/08/2025</span>
</body></html>
